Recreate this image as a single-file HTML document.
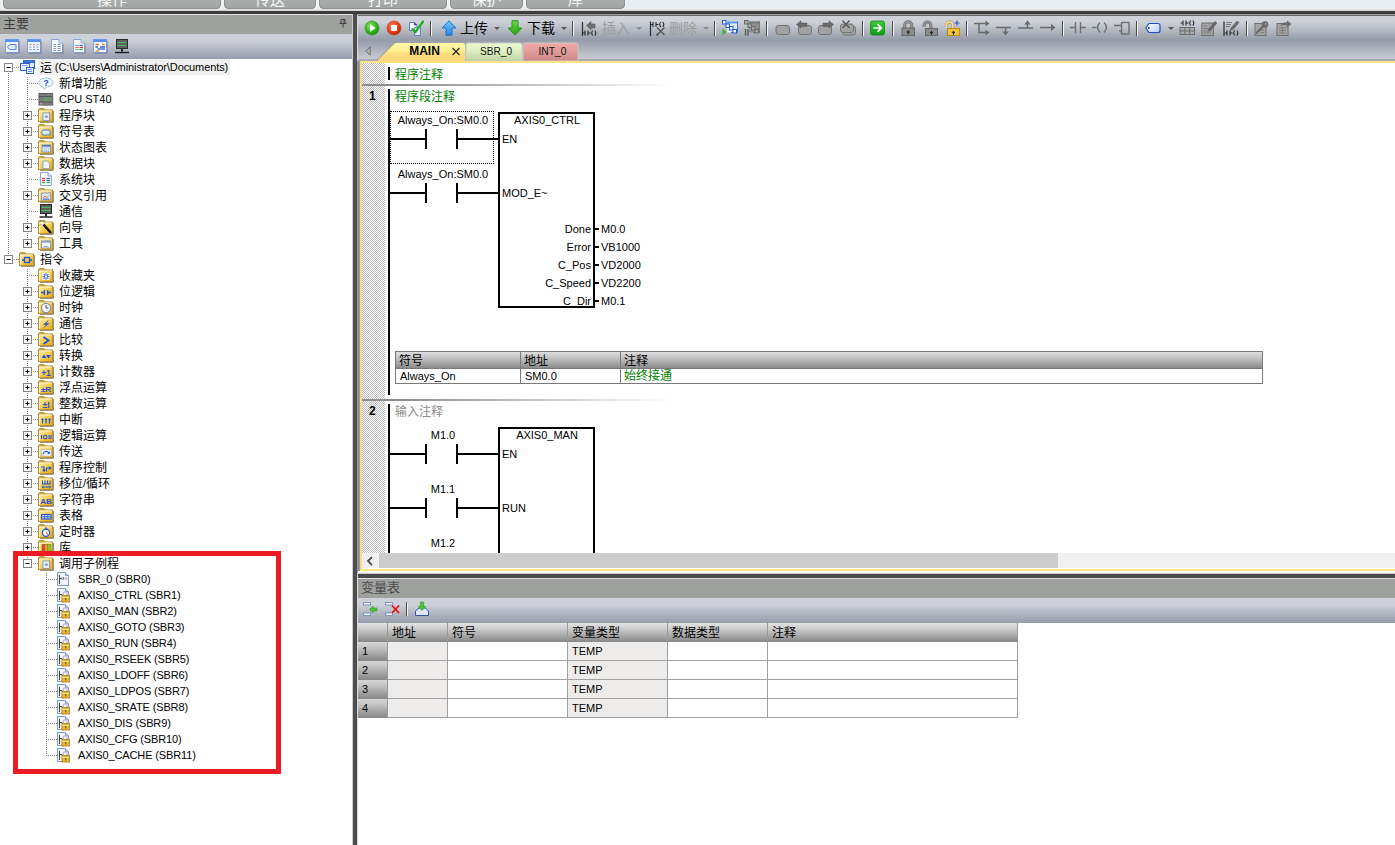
<!DOCTYPE html>
<html><head><meta charset="utf-8"><title>STEP 7-Micro/WIN SMART</title>
<style>
*{box-sizing:border-box;margin:0;padding:0}
html,body{width:1395px;height:845px;overflow:hidden;background:#fff}
body{position:relative;font-family:"Liberation Sans","Noto Sans CJK SC",sans-serif;font-size:11px;color:#000}
.c{font-size:12px}
.abs{position:absolute}
#ribbon{left:0;top:0;width:1395px;height:10px;background:#e7edf0}
.rg{position:absolute;top:-6px;height:15px;border:1px solid #8d9191;border-radius:0 0 4px 4px;background:linear-gradient(#adb1b0,#a1a5a4);box-shadow:0 0 0 1.5px #f2f4f4;color:#f6f8f8;text-align:center;overflow:hidden}
.rg div{position:relative;top:-3px;font-size:15px;line-height:15px}
.rg .c{font-size:15px}
#lhead .c,#vhead .c{font-size:13px}
#darkband{left:0;top:9px;width:1395px;height:5px;background:linear-gradient(#ececec 0,#d4d4d4 1.5px,#404040 2.2px,#3a3a3a 5px)}
#lhead{left:0;top:14px;width:353px;height:20px;background:#9fa19f;border-top:1px solid #e2e2e2;color:#3d3d3d;line-height:17px;padding-left:3px}
#ltool{left:0;top:34px;width:353px;height:25px;background:linear-gradient(#ced1d7 0%,#cdd0d6 28%,#b7bbc5 55%,#959cab 100%)}
#tree{left:0;top:59px;width:352px;height:786px;background:#fff}
#split{left:352px;top:14px;width:6px;height:831px;background:linear-gradient(90deg,#cfcfcf 0,#cfcfcf 1px,#4e4e4e 1px,#4e4e4e 4.6px,#d9d9d9 4.6px,#d9d9d9 5.5px,#8a8a8a 5.5px)}
#rtool{left:358px;top:15px;width:1037px;height:46px;background:linear-gradient(#6c6c6c 0,#6c6c6c 1px,#ced1d7 1px,#cdd0d6 7px,#959ca8 25px,#c9ccd2 44.5px,#a8aab4 44.5px,#a8aab4 46px)}
#sep2{left:358px;top:571px;width:1037px;height:8px;background:linear-gradient(#fff 0,#f4f4f4 1.5px,#c4c4c4 2.6px,#4a4a4a 3px,#4a4a4a 6.6px,#d8d8d8 7px,#e4e4e4 8px)}
#vhead{left:358px;top:579px;width:1037px;height:19px;background:#9fa19f;color:#4a4a4a;line-height:18px;padding-left:3px}
#vtool{left:358px;top:598px;width:1037px;height:25px;background:linear-gradient(#ced1d7 0%,#cdd0d6 28%,#b7bbc5 55%,#959cab 100%)}
#redbox{left:13px;top:551px;width:268px;height:223px;border:5px solid #ed1c24}

.dv{position:absolute;width:1px;background:repeating-linear-gradient(#fff 0,#fff 1px,#808080 1px,#808080 2px)}
.dh{position:absolute;height:1px;background:repeating-linear-gradient(90deg,#fff 0,#fff 1px,#808080 1px,#808080 2px)}
.tl{position:absolute;height:16px;line-height:16px;padding:0 2px;white-space:nowrap;font-size:11px}
.tl.sel{background:#f0f0f0;letter-spacing:-0.1px}
.tl .c{position:relative;top:1px}
.tl.l2{letter-spacing:-0.13px}

.tsep{position:absolute;top:6px;width:2px;height:15px;background:linear-gradient(90deg,#4a4a4a 0,#4a4a4a 1px,#f4f4f4 1px)}
.tlbl{position:absolute;top:3px;height:20px;line-height:20px;font-size:13px;color:#000;white-space:nowrap;letter-spacing:0}
.tlbl .c{font-size:14px}
.tlbl.g{color:#9c9c9c}

.lt{position:absolute;height:14px;line-height:14px;white-space:nowrap;font-size:11px}
.lt.ctr{text-align:center}
.lt.b{font-weight:bold;font-size:12px}
.grn{color:#008000}
.gry{color:#8c8c8c}
.gut{background-color:#fff;background-image:linear-gradient(45deg,#bcbcbc 25%,transparent 25%,transparent 75%,#bcbcbc 75%),linear-gradient(45deg,#bcbcbc 25%,transparent 25%,transparent 75%,#bcbcbc 75%);background-size:2px 2px;background-position:0 0,1px 1px}
</style></head><body>
<div id="ribbon" class="abs">
 <div class="rg" style="left:3px;width:218px"><div><span class="c">操作</span></div></div>
 <div class="rg" style="left:224px;width:92px"><div><span class="c">传送</span></div></div>
 <div class="rg" style="left:319px;width:128px"><div><span class="c">打印</span></div></div>
 <div class="rg" style="left:450px;width:73px"><div><span class="c">保护</span></div></div>
 <div class="rg" style="left:526px;width:99px"><div><span class="c">库</span></div></div>
</div>
<div id="darkband" class="abs"></div>
<div id="lhead" class="abs"><span class="c">主要</span><svg class="abs" style="left:339px;top:4px" width="8" height="9" viewBox="0 0 8 9"><path d="M2 .5 H6 V4.5 H2 Z M.5 4.5 H7.5 M4 4.5 V8.5" fill="none" stroke="#3f3f3f" stroke-width="1"/><path d="M5 .5 V4.5" stroke="#3f3f3f" stroke-width="1"/></svg></div>
<div id="ltool" class="abs"><div class="abs" style="left:4px;top:4px"><svg width="16" height="16" viewBox="0 0 16 16" style="display:block;"><rect x="1.5" y="1.5" width="13" height="13" fill="#eef3fd" stroke="#7f9fe0" stroke-width="1"/><rect x="1.5" y="1.5" width="13" height="2.5" fill="#5b8ff0"/><path d="M15.3 3 V15.3 H3" stroke="#5a6a8a" stroke-width=".8" fill="none" opacity=".7"/><path d="M5.5 6.5 H12 V11.5 H5.5 L3.5 9 Z" fill="#dfe9fb" stroke="#5f86d8" stroke-width="1"/></svg></div>
<div class="abs" style="left:26px;top:4px"><svg width="16" height="16" viewBox="0 0 16 16" style="display:block;"><rect x="1.5" y="1.5" width="13" height="13" fill="#eef3fd" stroke="#7f9fe0" stroke-width="1"/><rect x="1.5" y="1.5" width="13" height="2.5" fill="#5b8ff0"/><path d="M15.3 3 V15.3 H3" stroke="#5a6a8a" stroke-width=".8" fill="none" opacity=".7"/><path d="M3.5 6.5 H5.5 M7 6.5 H9 M10.5 6.5 H12.5 M3.5 9 H5.5 M7 9 H9 M10.5 9 H12.5 M3.5 11.5 H5.5 M7 11.5 H9 M10.5 11.5 H12.5" stroke="#8a9ab8" stroke-width="1.2"/></svg></div>
<div class="abs" style="left:49px;top:4px"><svg width="16" height="16" viewBox="0 0 16 16" style="display:block;"><path d="M2.5 1.5 H10 L13.5 5 V14.5 H2.5 Z" fill="#f3f7ff" stroke="#8aa6d8" stroke-width="1"/><path d="M10 1.5 V5 H13.5" fill="#dbe6fa" stroke="#8aa6d8"/><path d="M14.3 6 V15.3 H4" stroke="#5a6a8a" stroke-width=".8" fill="none" opacity=".6"/><path d="M4.5 6.5 H7 M8.5 6.5 H11.5 M4.5 8.5 H7 M8.5 8.5 H11.5 M4.5 10.5 H7 M8.5 10.5 H11.5 M4.5 12.5 H7 M8.5 12.5 H11.5" stroke="#8a9ab8" stroke-width="1"/></svg></div>
<div class="abs" style="left:71px;top:4px"><svg width="16" height="16" viewBox="0 0 16 16" style="display:block;"><path d="M2.5 1.5 H10 L13.5 5 V14.5 H2.5 Z" fill="#f3f7ff" stroke="#8aa6d8" stroke-width="1"/><path d="M10 1.5 V5 H13.5" fill="#dbe6fa" stroke="#8aa6d8"/><path d="M14.3 6 V15.3 H4" stroke="#5a6a8a" stroke-width=".8" fill="none" opacity=".6"/><path d="M4.5 7.5 H5.7 M6.3 7.5 H7.5" stroke="#36c" stroke-width="1.2"/><path d="M8.5 7.5 H12" stroke="#36c" stroke-width="1.2"/><path d="M4.5 9.5 H5.7 M6.3 9.5 H7.5 M8.5 9.5 H12" stroke="#e22" stroke-width="1.2"/><path d="M4.5 11.5 H5.7 M6.3 11.5 H7.5 M8.5 11.5 H12" stroke="#3a3" stroke-width="1.2"/></svg></div>
<div class="abs" style="left:92px;top:4px"><svg width="16" height="16" viewBox="0 0 16 16" style="display:block;"><rect x="1.5" y="1.5" width="13" height="13" fill="#eef3fd" stroke="#7f9fe0" stroke-width="1"/><rect x="1.5" y="1.5" width="13" height="2.5" fill="#5b8ff0"/><path d="M15.3 3 V15.3 H3" stroke="#5a6a8a" stroke-width=".8" fill="none" opacity=".7"/><path d="M3.5 6.5 H7 M10 6.5 H12.5" stroke="#f08020" stroke-width="1.3"/><path d="M3.5 9 H6 M8 9 H13" stroke="#36c" stroke-width="1.3"/><path d="M5.5 11 H13" stroke="#36c" stroke-width="1.3"/><path d="M3.5 13 H7" stroke="#f08020" stroke-width="1.3"/></svg></div>
<div class="abs" style="left:114px;top:4px"><svg width="16" height="16" viewBox="0 0 16 16" style="display:block;"><rect x="2.5" y="1.5" width="11" height="9" fill="#5f5f5f" stroke="#2a2a2a"/><path d="M3.5 4.5 H12.5 M3.5 7.5 H12.5" stroke="#3fbf55" stroke-width="1.2"/><path d="M8 10.5 V13.5" stroke="#222" stroke-width="2"/><path d="M1 14.5 H15" stroke="#222" stroke-width="1.5"/></svg></div></div>
<div id="tree" class="abs">
<div class="dv" style="left:8px;top:13px;height:183px"></div>
<div class="dv" style="left:27px;top:17px;height:168px"></div>
<div class="dv" style="left:27px;top:209px;height:291px"></div>
<div class="dv" style="left:46px;top:513px;height:184px"></div>
<div class="dh" style="left:13px;top:8px;width:6px"></div>
<div class="abs" style="left:4px;top:4px"><svg width="9" height="9" viewBox="0 0 9 9" style="display:block;"><rect x=".5" y=".5" width="8" height="8" fill="#fff" stroke="#848484" stroke-width="1"/><path d="M2.5 4.5 H6.5" stroke="#000" stroke-width="1"/></svg></div>
<div class="abs" style="left:19px;top:0px"><svg width="16" height="16" viewBox="0 0 16 16" style="display:block;"><rect x="4.5" y="1.5" width="11" height="8" fill="#e6eefc" stroke="#2f62c8"/><rect x="4.5" y="1.5" width="11" height="2" fill="#4a80e6" stroke="#2f62c8"/><rect x="1.5" y="4.5" width="9" height="7" fill="#eef3fd" stroke="#2f62c8"/><path d="M3 6.5 H9" stroke="#7fa0e8" stroke-width="1"/><rect x="7.5" y="8.5" width="7" height="6" fill="#f8faff" stroke="#2f62c8"/><path d="M9 10.5 H13 M9 12.5 H13" stroke="#5f8ae0" stroke-width="1"/></svg></div>
<div class="tl sel" style="left:38px;top:0px"><span class="c">运</span> (C:\Users\Administrator\Documents)</div>
<div class="dh" style="left:28px;top:24px;width:11px"></div>
<div class="abs" style="left:38px;top:16px"><svg width="16" height="16" viewBox="0 0 16 16" style="display:block;"><path d="M8 3 C3.5 3 1 5 1 7.5 C1 9.5 2.6 11 5 11.6 L6.5 14.5 L8.2 12 C12.5 12 15 10 15 7.5 C15 5 12.5 3 8 3 Z" fill="#eef7fd" stroke="#9cc3dc" stroke-width="1"/><text x="8" y="10.5" font-family="Liberation Sans,sans-serif" font-size="8.5" font-weight="bold" fill="#2446c8" text-anchor="middle">?</text></svg></div>
<div class="tl" style="left:57px;top:16px"><span class="c">新增功能</span></div>
<div class="dh" style="left:28px;top:40px;width:10px"></div>
<div class="abs" style="left:38px;top:32px"><svg width="16" height="16" viewBox="0 0 16 16" style="display:block;"><rect x="1" y="2.5" width="13.5" height="11.5" fill="#7e7e7e" stroke="#5a5a5a" stroke-width="1"/><path d="M1 5.5 H14.5 M1 11 H14.5" stroke="#555" stroke-width="1"/><path d="M5.5 7 H13 M5.5 9.5 H13" stroke="#35e04a" stroke-width="1" stroke-dasharray="1 1"/><rect x="2" y="12" width="2" height="1.5" fill="#aaa"/><path d="M15 3.5 V14.2 H2.5" stroke="#999" stroke-width=".8" fill="none"/></svg></div>
<div class="tl" style="left:57px;top:32px">CPU ST40</div>
<div class="dh" style="left:32px;top:56px;width:6px"></div>
<div class="abs" style="left:23px;top:52px"><svg width="9" height="9" viewBox="0 0 9 9" style="display:block;"><rect x=".5" y=".5" width="8" height="8" fill="#fff" stroke="#848484" stroke-width="1"/><path d="M2.5 4.5 H6.5" stroke="#000" stroke-width="1"/><path d="M4.5 2.5 V6.5" stroke="#000" stroke-width="1"/></svg></div>
<div class="abs" style="left:38px;top:48px"><svg width="16" height="16" viewBox="0 0 16 16" style="display:block;"><linearGradient id="g1" x1="0" y1="0" x2="1" y2="1"><stop offset="0" stop-color="#fdf2bc"/><stop offset=".42" stop-color="#f7d45e"/><stop offset="1" stop-color="#e3a614"/></linearGradient><path d="M15.3 4 V15.3 H2" stroke="#6e6248" stroke-width="1" fill="none" opacity=".85"/><path d="M.5 3 L1.5 1.5 H6 L7.2 3 Z" fill="#f6e29a" stroke="#b99a45" stroke-width="1"/><rect x=".5" y="3" width="14" height="11.5" fill="url(#g1)" stroke="#b5922f" stroke-width="1"/><path d="M1.5 4 H13.5 M1.5 4 V13.5" stroke="#fff9dc" stroke-width="1" fill="none" opacity=".9"/><rect x="5" y="6" width="6.5" height="7.5" fill="#e8eefc" stroke="#6f8fd0" stroke-width=".8"/><path d="M6.5 9.8 H8 M8.8 9.8 H10.2 M8 8.5 V11 M8.8 8.5 V11" stroke="#6c86c8" stroke-width=".8"/></svg></div>
<div class="tl" style="left:57px;top:48px"><span class="c">程序块</span></div>
<div class="dh" style="left:32px;top:72px;width:6px"></div>
<div class="abs" style="left:23px;top:68px"><svg width="9" height="9" viewBox="0 0 9 9" style="display:block;"><rect x=".5" y=".5" width="8" height="8" fill="#fff" stroke="#848484" stroke-width="1"/><path d="M2.5 4.5 H6.5" stroke="#000" stroke-width="1"/><path d="M4.5 2.5 V6.5" stroke="#000" stroke-width="1"/></svg></div>
<div class="abs" style="left:38px;top:64px"><svg width="16" height="16" viewBox="0 0 16 16" style="display:block;"><linearGradient id="g2" x1="0" y1="0" x2="1" y2="1"><stop offset="0" stop-color="#fdf2bc"/><stop offset=".42" stop-color="#f7d45e"/><stop offset="1" stop-color="#e3a614"/></linearGradient><path d="M15.3 4 V15.3 H2" stroke="#6e6248" stroke-width="1" fill="none" opacity=".85"/><path d="M.5 3 L1.5 1.5 H6 L7.2 3 Z" fill="#f6e29a" stroke="#b99a45" stroke-width="1"/><rect x=".5" y="3" width="14" height="11.5" fill="url(#g2)" stroke="#b5922f" stroke-width="1"/><path d="M1.5 4 H13.5 M1.5 4 V13.5" stroke="#fff9dc" stroke-width="1" fill="none" opacity=".9"/><path d="M5 7 H12 V12 H5 L3.3 9.5 Z" fill="#dfe9fb" stroke="#4d78d0" stroke-width="1"/></svg></div>
<div class="tl" style="left:57px;top:64px"><span class="c">符号表</span></div>
<div class="dh" style="left:32px;top:88px;width:6px"></div>
<div class="abs" style="left:23px;top:84px"><svg width="9" height="9" viewBox="0 0 9 9" style="display:block;"><rect x=".5" y=".5" width="8" height="8" fill="#fff" stroke="#848484" stroke-width="1"/><path d="M2.5 4.5 H6.5" stroke="#000" stroke-width="1"/><path d="M4.5 2.5 V6.5" stroke="#000" stroke-width="1"/></svg></div>
<div class="abs" style="left:38px;top:80px"><svg width="16" height="16" viewBox="0 0 16 16" style="display:block;"><linearGradient id="g3" x1="0" y1="0" x2="1" y2="1"><stop offset="0" stop-color="#fdf2bc"/><stop offset=".42" stop-color="#f7d45e"/><stop offset="1" stop-color="#e3a614"/></linearGradient><path d="M15.3 4 V15.3 H2" stroke="#6e6248" stroke-width="1" fill="none" opacity=".85"/><path d="M.5 3 L1.5 1.5 H6 L7.2 3 Z" fill="#f6e29a" stroke="#b99a45" stroke-width="1"/><rect x=".5" y="3" width="14" height="11.5" fill="url(#g3)" stroke="#b5922f" stroke-width="1"/><path d="M1.5 4 H13.5 M1.5 4 V13.5" stroke="#fff9dc" stroke-width="1" fill="none" opacity=".9"/><rect x="4" y="6" width="8.5" height="7" fill="#dce6f8" stroke="#6f8fd0" stroke-width=".8"/><rect x="4" y="6" width="8.5" height="1.6" fill="#4d78d0"/><path d="M6.2 8 V13 M8.3 8 V13 M10.4 8 V13" stroke="#9fb3dd" stroke-width=".6"/></svg></div>
<div class="tl" style="left:57px;top:80px"><span class="c">状态图表</span></div>
<div class="dh" style="left:32px;top:104px;width:6px"></div>
<div class="abs" style="left:23px;top:100px"><svg width="9" height="9" viewBox="0 0 9 9" style="display:block;"><rect x=".5" y=".5" width="8" height="8" fill="#fff" stroke="#848484" stroke-width="1"/><path d="M2.5 4.5 H6.5" stroke="#000" stroke-width="1"/><path d="M4.5 2.5 V6.5" stroke="#000" stroke-width="1"/></svg></div>
<div class="abs" style="left:38px;top:96px"><svg width="16" height="16" viewBox="0 0 16 16" style="display:block;"><linearGradient id="g4" x1="0" y1="0" x2="1" y2="1"><stop offset="0" stop-color="#fdf2bc"/><stop offset=".42" stop-color="#f7d45e"/><stop offset="1" stop-color="#e3a614"/></linearGradient><path d="M15.3 4 V15.3 H2" stroke="#6e6248" stroke-width="1" fill="none" opacity=".85"/><path d="M.5 3 L1.5 1.5 H6 L7.2 3 Z" fill="#f6e29a" stroke="#b99a45" stroke-width="1"/><rect x=".5" y="3" width="14" height="11.5" fill="url(#g4)" stroke="#b5922f" stroke-width="1"/><path d="M1.5 4 H13.5 M1.5 4 V13.5" stroke="#fff9dc" stroke-width="1" fill="none" opacity=".9"/><path d="M5 6 H9.5 L11.5 8 V13.5 H5 Z" fill="#eef3fc" stroke="#7f99c8" stroke-width=".8"/></svg></div>
<div class="tl" style="left:57px;top:96px"><span class="c">数据块</span></div>
<div class="dh" style="left:28px;top:120px;width:11px"></div>
<div class="abs" style="left:38px;top:112px"><svg width="16" height="16" viewBox="0 0 16 16" style="display:block;"><path d="M2.5 1.5 H10 L13.5 5 V14.5 H2.5 Z" fill="#f3f7ff" stroke="#8aa6d8"/><path d="M10 1.5 V5 H13.5" fill="#dbe6fa" stroke="#8aa6d8"/><path d="M4 7.5 H7" stroke="#d33" stroke-width="1.2"/><path d="M8.5 7.5 H12" stroke="#36c" stroke-width="1.2"/><path d="M4 9.5 H7" stroke="#d33" stroke-width="1.2"/><path d="M8.5 9.5 H12" stroke="#36c" stroke-width="1.2"/><path d="M4 11.5 H7" stroke="#3a3" stroke-width="1.2"/><path d="M8.5 11.5 H12" stroke="#3a3" stroke-width="1.2"/></svg></div>
<div class="tl" style="left:57px;top:112px"><span class="c">系统块</span></div>
<div class="dh" style="left:32px;top:136px;width:6px"></div>
<div class="abs" style="left:23px;top:132px"><svg width="9" height="9" viewBox="0 0 9 9" style="display:block;"><rect x=".5" y=".5" width="8" height="8" fill="#fff" stroke="#848484" stroke-width="1"/><path d="M2.5 4.5 H6.5" stroke="#000" stroke-width="1"/><path d="M4.5 2.5 V6.5" stroke="#000" stroke-width="1"/></svg></div>
<div class="abs" style="left:38px;top:128px"><svg width="16" height="16" viewBox="0 0 16 16" style="display:block;"><linearGradient id="g5" x1="0" y1="0" x2="1" y2="1"><stop offset="0" stop-color="#fdf2bc"/><stop offset=".42" stop-color="#f7d45e"/><stop offset="1" stop-color="#e3a614"/></linearGradient><path d="M15.3 4 V15.3 H2" stroke="#6e6248" stroke-width="1" fill="none" opacity=".85"/><path d="M.5 3 L1.5 1.5 H6 L7.2 3 Z" fill="#f6e29a" stroke="#b99a45" stroke-width="1"/><rect x=".5" y="3" width="14" height="11.5" fill="url(#g5)" stroke="#b5922f" stroke-width="1"/><path d="M1.5 4 H13.5 M1.5 4 V13.5" stroke="#fff9dc" stroke-width="1" fill="none" opacity=".9"/><rect x="3.5" y="6" width="9" height="7" fill="#dfe9fb" stroke="#6f8fd0" stroke-width=".8"/><path d="M5 11 L7 9 L9 10.5 L11 8.5" stroke="#e07820" stroke-width="1" fill="none"/><path d="M5 12 H11" stroke="#36c" stroke-width="1"/></svg></div>
<div class="tl" style="left:57px;top:128px"><span class="c">交叉引用</span></div>
<div class="dh" style="left:28px;top:152px;width:10px"></div>
<div class="abs" style="left:38px;top:144px"><svg width="16" height="16" viewBox="0 0 16 16" style="display:block;"><rect x="2.5" y="1.5" width="11" height="9" fill="#5f5f5f" stroke="#2a2a2a"/><path d="M3.5 4.5 H12.5 M3.5 7.5 H12.5" stroke="#3fbf55" stroke-width="1.2"/><path d="M8 10.5 V13.5" stroke="#222" stroke-width="2"/><path d="M1.5 14 H14.5" stroke="#222" stroke-width="1.5"/></svg></div>
<div class="tl" style="left:57px;top:144px"><span class="c">通信</span></div>
<div class="dh" style="left:32px;top:168px;width:6px"></div>
<div class="abs" style="left:23px;top:164px"><svg width="9" height="9" viewBox="0 0 9 9" style="display:block;"><rect x=".5" y=".5" width="8" height="8" fill="#fff" stroke="#848484" stroke-width="1"/><path d="M2.5 4.5 H6.5" stroke="#000" stroke-width="1"/><path d="M4.5 2.5 V6.5" stroke="#000" stroke-width="1"/></svg></div>
<div class="abs" style="left:38px;top:160px"><svg width="16" height="16" viewBox="0 0 16 16" style="display:block;"><linearGradient id="g6" x1="0" y1="0" x2="1" y2="1"><stop offset="0" stop-color="#fdf2bc"/><stop offset=".42" stop-color="#f7d45e"/><stop offset="1" stop-color="#e3a614"/></linearGradient><path d="M15.3 4 V15.3 H2" stroke="#6e6248" stroke-width="1" fill="none" opacity=".85"/><path d="M.5 3 L1.5 1.5 H6 L7.2 3 Z" fill="#f6e29a" stroke="#b99a45" stroke-width="1"/><rect x=".5" y="3" width="14" height="11.5" fill="url(#g6)" stroke="#b5922f" stroke-width="1"/><path d="M1.5 4 H13.5 M1.5 4 V13.5" stroke="#fff9dc" stroke-width="1" fill="none" opacity=".9"/><path d="M4.5 4.5 L13 14" stroke="#111" stroke-width="2.6"/><path d="M3 3 L5.5 5.5" stroke="#fff" stroke-width="2"/><path d="M2 1.5 l1 1 M6.5 1.5 l-.8 .8 M1.5 6 l.8 -.5" stroke="#333" stroke-width="1"/></svg></div>
<div class="tl" style="left:57px;top:160px"><span class="c">向导</span></div>
<div class="dh" style="left:32px;top:184px;width:6px"></div>
<div class="abs" style="left:23px;top:180px"><svg width="9" height="9" viewBox="0 0 9 9" style="display:block;"><rect x=".5" y=".5" width="8" height="8" fill="#fff" stroke="#848484" stroke-width="1"/><path d="M2.5 4.5 H6.5" stroke="#000" stroke-width="1"/><path d="M4.5 2.5 V6.5" stroke="#000" stroke-width="1"/></svg></div>
<div class="abs" style="left:38px;top:176px"><svg width="16" height="16" viewBox="0 0 16 16" style="display:block;"><linearGradient id="g7" x1="0" y1="0" x2="1" y2="1"><stop offset="0" stop-color="#fdf2bc"/><stop offset=".42" stop-color="#f7d45e"/><stop offset="1" stop-color="#e3a614"/></linearGradient><path d="M15.3 4 V15.3 H2" stroke="#6e6248" stroke-width="1" fill="none" opacity=".85"/><path d="M.5 3 L1.5 1.5 H6 L7.2 3 Z" fill="#f6e29a" stroke="#b99a45" stroke-width="1"/><rect x=".5" y="3" width="14" height="11.5" fill="url(#g7)" stroke="#b5922f" stroke-width="1"/><path d="M1.5 4 H13.5 M1.5 4 V13.5" stroke="#fff9dc" stroke-width="1" fill="none" opacity=".9"/><rect x="3.5" y="6" width="9" height="7" fill="#f4f7fd" stroke="#6f8fd0" stroke-width=".8"/><rect x="3.5" y="6" width="9" height="1.6" fill="#7fa0e0"/><path d="M5.5 11.5 H10.5" stroke="#9ab" stroke-width="1"/></svg></div>
<div class="tl" style="left:57px;top:176px"><span class="c">工具</span></div>
<div class="dh" style="left:13px;top:200px;width:6px"></div>
<div class="abs" style="left:4px;top:196px"><svg width="9" height="9" viewBox="0 0 9 9" style="display:block;"><rect x=".5" y=".5" width="8" height="8" fill="#fff" stroke="#848484" stroke-width="1"/><path d="M2.5 4.5 H6.5" stroke="#000" stroke-width="1"/></svg></div>
<div class="abs" style="left:19px;top:192px"><svg width="16" height="16" viewBox="0 0 16 16" style="display:block;"><linearGradient id="g8" x1="0" y1="0" x2="1" y2="1"><stop offset="0" stop-color="#fdf2bc"/><stop offset=".42" stop-color="#f7d45e"/><stop offset="1" stop-color="#e3a614"/></linearGradient><path d="M15.3 4 V15.3 H2" stroke="#6e6248" stroke-width="1" fill="none" opacity=".85"/><path d="M.5 3 L1.5 1.5 H6 L7.2 3 Z" fill="#f6e29a" stroke="#b99a45" stroke-width="1"/><rect x=".5" y="3" width="14" height="11.5" fill="url(#g8)" stroke="#b5922f" stroke-width="1"/><path d="M1.5 4 H13.5 M1.5 4 V13.5" stroke="#fff9dc" stroke-width="1" fill="none" opacity=".9"/><rect x="5.5" y="6.5" width="5" height="5" fill="none" stroke="#1f55d8" stroke-width="1.3"/><path d="M3 9 H5.5 M10.5 9 H13" stroke="#1f55d8" stroke-width="1.3"/></svg></div>
<div class="tl" style="left:38px;top:192px"><span class="c">指令</span></div>
<div class="dh" style="left:28px;top:216px;width:10px"></div>
<div class="abs" style="left:38px;top:208px"><svg width="16" height="16" viewBox="0 0 16 16" style="display:block;"><linearGradient id="g9" x1="0" y1="0" x2="1" y2="1"><stop offset="0" stop-color="#fdf2bc"/><stop offset=".42" stop-color="#f7d45e"/><stop offset="1" stop-color="#e3a614"/></linearGradient><path d="M15.3 4 V15.3 H2" stroke="#6e6248" stroke-width="1" fill="none" opacity=".85"/><path d="M.5 3 L1.5 1.5 H6 L7.2 3 Z" fill="#f6e29a" stroke="#b99a45" stroke-width="1"/><rect x=".5" y="3" width="14" height="11.5" fill="url(#g9)" stroke="#b5922f" stroke-width="1"/><path d="M1.5 4 H13.5 M1.5 4 V13.5" stroke="#fff9dc" stroke-width="1" fill="none" opacity=".9"/><rect x="4.5" y="6" width="7" height="7" fill="#f4f7ff"/><path d="M8 6.3 V12.7 M4.8 9.5 H11.2 M5.6 7.1 L10.4 11.9 M10.4 7.1 L5.6 11.9" stroke="#3f6fe8" stroke-width="1.1"/><rect x="7" y="8.5" width="2" height="2" fill="#fff"/></svg></div>
<div class="tl" style="left:57px;top:208px"><span class="c">收藏夹</span></div>
<div class="dh" style="left:32px;top:232px;width:6px"></div>
<div class="abs" style="left:23px;top:228px"><svg width="9" height="9" viewBox="0 0 9 9" style="display:block;"><rect x=".5" y=".5" width="8" height="8" fill="#fff" stroke="#848484" stroke-width="1"/><path d="M2.5 4.5 H6.5" stroke="#000" stroke-width="1"/><path d="M4.5 2.5 V6.5" stroke="#000" stroke-width="1"/></svg></div>
<div class="abs" style="left:38px;top:224px"><svg width="16" height="16" viewBox="0 0 16 16" style="display:block;"><linearGradient id="g10" x1="0" y1="0" x2="1" y2="1"><stop offset="0" stop-color="#fdf2bc"/><stop offset=".42" stop-color="#f7d45e"/><stop offset="1" stop-color="#e3a614"/></linearGradient><path d="M15.3 4 V15.3 H2" stroke="#6e6248" stroke-width="1" fill="none" opacity=".85"/><path d="M.5 3 L1.5 1.5 H6 L7.2 3 Z" fill="#f6e29a" stroke="#b99a45" stroke-width="1"/><rect x=".5" y="3" width="14" height="11.5" fill="url(#g10)" stroke="#b5922f" stroke-width="1"/><path d="M1.5 4 H13.5 M1.5 4 V13.5" stroke="#fff9dc" stroke-width="1" fill="none" opacity=".9"/><path d="M3 9.5 H6.3 M9.7 9.5 H13 M6.3 7 V12 M9.7 7 V12" stroke="#1f55d8" stroke-width="1.3"/></svg></div>
<div class="tl" style="left:57px;top:224px"><span class="c">位逻辑</span></div>
<div class="dh" style="left:32px;top:248px;width:6px"></div>
<div class="abs" style="left:23px;top:244px"><svg width="9" height="9" viewBox="0 0 9 9" style="display:block;"><rect x=".5" y=".5" width="8" height="8" fill="#fff" stroke="#848484" stroke-width="1"/><path d="M2.5 4.5 H6.5" stroke="#000" stroke-width="1"/><path d="M4.5 2.5 V6.5" stroke="#000" stroke-width="1"/></svg></div>
<div class="abs" style="left:38px;top:240px"><svg width="16" height="16" viewBox="0 0 16 16" style="display:block;"><linearGradient id="g11" x1="0" y1="0" x2="1" y2="1"><stop offset="0" stop-color="#fdf2bc"/><stop offset=".42" stop-color="#f7d45e"/><stop offset="1" stop-color="#e3a614"/></linearGradient><path d="M15.3 4 V15.3 H2" stroke="#6e6248" stroke-width="1" fill="none" opacity=".85"/><path d="M.5 3 L1.5 1.5 H6 L7.2 3 Z" fill="#f6e29a" stroke="#b99a45" stroke-width="1"/><rect x=".5" y="3" width="14" height="11.5" fill="url(#g11)" stroke="#b5922f" stroke-width="1"/><path d="M1.5 4 H13.5 M1.5 4 V13.5" stroke="#fff9dc" stroke-width="1" fill="none" opacity=".9"/><circle cx="8" cy="9" r="4.6" fill="#f3f6fc" stroke="#8a8fa8" stroke-width="1.2"/><path d="M8 6 V9 H10.5" stroke="#445" stroke-width=".9" fill="none"/></svg></div>
<div class="tl" style="left:57px;top:240px"><span class="c">时钟</span></div>
<div class="dh" style="left:32px;top:264px;width:6px"></div>
<div class="abs" style="left:23px;top:260px"><svg width="9" height="9" viewBox="0 0 9 9" style="display:block;"><rect x=".5" y=".5" width="8" height="8" fill="#fff" stroke="#848484" stroke-width="1"/><path d="M2.5 4.5 H6.5" stroke="#000" stroke-width="1"/><path d="M4.5 2.5 V6.5" stroke="#000" stroke-width="1"/></svg></div>
<div class="abs" style="left:38px;top:256px"><svg width="16" height="16" viewBox="0 0 16 16" style="display:block;"><linearGradient id="g12" x1="0" y1="0" x2="1" y2="1"><stop offset="0" stop-color="#fdf2bc"/><stop offset=".42" stop-color="#f7d45e"/><stop offset="1" stop-color="#e3a614"/></linearGradient><path d="M15.3 4 V15.3 H2" stroke="#6e6248" stroke-width="1" fill="none" opacity=".85"/><path d="M.5 3 L1.5 1.5 H6 L7.2 3 Z" fill="#f6e29a" stroke="#b99a45" stroke-width="1"/><rect x=".5" y="3" width="14" height="11.5" fill="url(#g12)" stroke="#b5922f" stroke-width="1"/><path d="M1.5 4 H13.5 M1.5 4 V13.5" stroke="#fff9dc" stroke-width="1" fill="none" opacity=".9"/><path d="M11 4.5 L5 9.8 H8 L4.5 14 L11.5 8.3 H8.5 Z" fill="#1f55d8"/></svg></div>
<div class="tl" style="left:57px;top:256px"><span class="c">通信</span></div>
<div class="dh" style="left:32px;top:280px;width:6px"></div>
<div class="abs" style="left:23px;top:276px"><svg width="9" height="9" viewBox="0 0 9 9" style="display:block;"><rect x=".5" y=".5" width="8" height="8" fill="#fff" stroke="#848484" stroke-width="1"/><path d="M2.5 4.5 H6.5" stroke="#000" stroke-width="1"/><path d="M4.5 2.5 V6.5" stroke="#000" stroke-width="1"/></svg></div>
<div class="abs" style="left:38px;top:272px"><svg width="16" height="16" viewBox="0 0 16 16" style="display:block;"><linearGradient id="g13" x1="0" y1="0" x2="1" y2="1"><stop offset="0" stop-color="#fdf2bc"/><stop offset=".42" stop-color="#f7d45e"/><stop offset="1" stop-color="#e3a614"/></linearGradient><path d="M15.3 4 V15.3 H2" stroke="#6e6248" stroke-width="1" fill="none" opacity=".85"/><path d="M.5 3 L1.5 1.5 H6 L7.2 3 Z" fill="#f6e29a" stroke="#b99a45" stroke-width="1"/><rect x=".5" y="3" width="14" height="11.5" fill="url(#g13)" stroke="#b5922f" stroke-width="1"/><path d="M1.5 4 H13.5 M1.5 4 V13.5" stroke="#fff9dc" stroke-width="1" fill="none" opacity=".9"/><path d="M5.5 6 L10.5 9.5 L5.5 13" stroke="#1f55d8" stroke-width="1.8" fill="none"/></svg></div>
<div class="tl" style="left:57px;top:272px"><span class="c">比较</span></div>
<div class="dh" style="left:32px;top:296px;width:6px"></div>
<div class="abs" style="left:23px;top:292px"><svg width="9" height="9" viewBox="0 0 9 9" style="display:block;"><rect x=".5" y=".5" width="8" height="8" fill="#fff" stroke="#848484" stroke-width="1"/><path d="M2.5 4.5 H6.5" stroke="#000" stroke-width="1"/><path d="M4.5 2.5 V6.5" stroke="#000" stroke-width="1"/></svg></div>
<div class="abs" style="left:38px;top:288px"><svg width="16" height="16" viewBox="0 0 16 16" style="display:block;"><linearGradient id="g14" x1="0" y1="0" x2="1" y2="1"><stop offset="0" stop-color="#fdf2bc"/><stop offset=".42" stop-color="#f7d45e"/><stop offset="1" stop-color="#e3a614"/></linearGradient><path d="M15.3 4 V15.3 H2" stroke="#6e6248" stroke-width="1" fill="none" opacity=".85"/><path d="M.5 3 L1.5 1.5 H6 L7.2 3 Z" fill="#f6e29a" stroke="#b99a45" stroke-width="1"/><rect x=".5" y="3" width="14" height="11.5" fill="url(#g14)" stroke="#b5922f" stroke-width="1"/><path d="M1.5 4 H13.5 M1.5 4 V13.5" stroke="#fff9dc" stroke-width="1" fill="none" opacity=".9"/><path d="M3.5 11 L6 7.5 L8.5 11 Z M8 8 L10.5 11.5 L13 8 Z" fill="#1f55d8"/></svg></div>
<div class="tl" style="left:57px;top:288px"><span class="c">转换</span></div>
<div class="dh" style="left:32px;top:312px;width:6px"></div>
<div class="abs" style="left:23px;top:308px"><svg width="9" height="9" viewBox="0 0 9 9" style="display:block;"><rect x=".5" y=".5" width="8" height="8" fill="#fff" stroke="#848484" stroke-width="1"/><path d="M2.5 4.5 H6.5" stroke="#000" stroke-width="1"/><path d="M4.5 2.5 V6.5" stroke="#000" stroke-width="1"/></svg></div>
<div class="abs" style="left:38px;top:304px"><svg width="16" height="16" viewBox="0 0 16 16" style="display:block;"><linearGradient id="g15" x1="0" y1="0" x2="1" y2="1"><stop offset="0" stop-color="#fdf2bc"/><stop offset=".42" stop-color="#f7d45e"/><stop offset="1" stop-color="#e3a614"/></linearGradient><path d="M15.3 4 V15.3 H2" stroke="#6e6248" stroke-width="1" fill="none" opacity=".85"/><path d="M.5 3 L1.5 1.5 H6 L7.2 3 Z" fill="#f6e29a" stroke="#b99a45" stroke-width="1"/><rect x=".5" y="3" width="14" height="11.5" fill="url(#g15)" stroke="#b5922f" stroke-width="1"/><path d="M1.5 4 H13.5 M1.5 4 V13.5" stroke="#fff9dc" stroke-width="1" fill="none" opacity=".9"/><text x="8" y="12.5" font-family="Liberation Sans,sans-serif" font-size="8.5" font-weight="bold" fill="#1f55d8" text-anchor="middle" letter-spacing="0">+1</text></svg></div>
<div class="tl" style="left:57px;top:304px"><span class="c">计数器</span></div>
<div class="dh" style="left:32px;top:328px;width:6px"></div>
<div class="abs" style="left:23px;top:324px"><svg width="9" height="9" viewBox="0 0 9 9" style="display:block;"><rect x=".5" y=".5" width="8" height="8" fill="#fff" stroke="#848484" stroke-width="1"/><path d="M2.5 4.5 H6.5" stroke="#000" stroke-width="1"/><path d="M4.5 2.5 V6.5" stroke="#000" stroke-width="1"/></svg></div>
<div class="abs" style="left:38px;top:320px"><svg width="16" height="16" viewBox="0 0 16 16" style="display:block;"><linearGradient id="g16" x1="0" y1="0" x2="1" y2="1"><stop offset="0" stop-color="#fdf2bc"/><stop offset=".42" stop-color="#f7d45e"/><stop offset="1" stop-color="#e3a614"/></linearGradient><path d="M15.3 4 V15.3 H2" stroke="#6e6248" stroke-width="1" fill="none" opacity=".85"/><path d="M.5 3 L1.5 1.5 H6 L7.2 3 Z" fill="#f6e29a" stroke="#b99a45" stroke-width="1"/><rect x=".5" y="3" width="14" height="11.5" fill="url(#g16)" stroke="#b5922f" stroke-width="1"/><path d="M1.5 4 H13.5 M1.5 4 V13.5" stroke="#fff9dc" stroke-width="1" fill="none" opacity=".9"/><text x="8" y="12.5" font-family="Liberation Sans,sans-serif" font-size="8" font-weight="bold" fill="#1f55d8" text-anchor="middle" letter-spacing="0">±R</text></svg></div>
<div class="tl" style="left:57px;top:320px"><span class="c">浮点运算</span></div>
<div class="dh" style="left:32px;top:344px;width:6px"></div>
<div class="abs" style="left:23px;top:340px"><svg width="9" height="9" viewBox="0 0 9 9" style="display:block;"><rect x=".5" y=".5" width="8" height="8" fill="#fff" stroke="#848484" stroke-width="1"/><path d="M2.5 4.5 H6.5" stroke="#000" stroke-width="1"/><path d="M4.5 2.5 V6.5" stroke="#000" stroke-width="1"/></svg></div>
<div class="abs" style="left:38px;top:336px"><svg width="16" height="16" viewBox="0 0 16 16" style="display:block;"><linearGradient id="g17" x1="0" y1="0" x2="1" y2="1"><stop offset="0" stop-color="#fdf2bc"/><stop offset=".42" stop-color="#f7d45e"/><stop offset="1" stop-color="#e3a614"/></linearGradient><path d="M15.3 4 V15.3 H2" stroke="#6e6248" stroke-width="1" fill="none" opacity=".85"/><path d="M.5 3 L1.5 1.5 H6 L7.2 3 Z" fill="#f6e29a" stroke="#b99a45" stroke-width="1"/><rect x=".5" y="3" width="14" height="11.5" fill="url(#g17)" stroke="#b5922f" stroke-width="1"/><path d="M1.5 4 H13.5 M1.5 4 V13.5" stroke="#fff9dc" stroke-width="1" fill="none" opacity=".9"/><text x="8" y="12.5" font-family="Liberation Sans,sans-serif" font-size="8.5" font-weight="bold" fill="#1f55d8" text-anchor="middle" letter-spacing="0">±I</text></svg></div>
<div class="tl" style="left:57px;top:336px"><span class="c">整数运算</span></div>
<div class="dh" style="left:32px;top:360px;width:6px"></div>
<div class="abs" style="left:23px;top:356px"><svg width="9" height="9" viewBox="0 0 9 9" style="display:block;"><rect x=".5" y=".5" width="8" height="8" fill="#fff" stroke="#848484" stroke-width="1"/><path d="M2.5 4.5 H6.5" stroke="#000" stroke-width="1"/><path d="M4.5 2.5 V6.5" stroke="#000" stroke-width="1"/></svg></div>
<div class="abs" style="left:38px;top:352px"><svg width="16" height="16" viewBox="0 0 16 16" style="display:block;"><linearGradient id="g18" x1="0" y1="0" x2="1" y2="1"><stop offset="0" stop-color="#fdf2bc"/><stop offset=".42" stop-color="#f7d45e"/><stop offset="1" stop-color="#e3a614"/></linearGradient><path d="M15.3 4 V15.3 H2" stroke="#6e6248" stroke-width="1" fill="none" opacity=".85"/><path d="M.5 3 L1.5 1.5 H6 L7.2 3 Z" fill="#f6e29a" stroke="#b99a45" stroke-width="1"/><rect x=".5" y="3" width="14" height="11.5" fill="url(#g18)" stroke="#b5922f" stroke-width="1"/><path d="M1.5 4 H13.5 M1.5 4 V13.5" stroke="#fff9dc" stroke-width="1" fill="none" opacity=".9"/><path d="M4.5 8 V12.5 M8 8 V12.5 M11.5 8 V12.5" stroke="#1f55d8" stroke-width="1.2"/><path d="M3 9 L4.5 7 L6 9 Z M6.5 9 L8 7 L9.5 9 Z M10 9 L11.5 7 L13 9 Z" fill="#1f55d8"/></svg></div>
<div class="tl" style="left:57px;top:352px"><span class="c">中断</span></div>
<div class="dh" style="left:32px;top:376px;width:6px"></div>
<div class="abs" style="left:23px;top:372px"><svg width="9" height="9" viewBox="0 0 9 9" style="display:block;"><rect x=".5" y=".5" width="8" height="8" fill="#fff" stroke="#848484" stroke-width="1"/><path d="M2.5 4.5 H6.5" stroke="#000" stroke-width="1"/><path d="M4.5 2.5 V6.5" stroke="#000" stroke-width="1"/></svg></div>
<div class="abs" style="left:38px;top:368px"><svg width="16" height="16" viewBox="0 0 16 16" style="display:block;"><linearGradient id="g19" x1="0" y1="0" x2="1" y2="1"><stop offset="0" stop-color="#fdf2bc"/><stop offset=".42" stop-color="#f7d45e"/><stop offset="1" stop-color="#e3a614"/></linearGradient><path d="M15.3 4 V15.3 H2" stroke="#6e6248" stroke-width="1" fill="none" opacity=".85"/><path d="M.5 3 L1.5 1.5 H6 L7.2 3 Z" fill="#f6e29a" stroke="#b99a45" stroke-width="1"/><rect x=".5" y="3" width="14" height="11.5" fill="url(#g19)" stroke="#b5922f" stroke-width="1"/><path d="M1.5 4 H13.5 M1.5 4 V13.5" stroke="#fff9dc" stroke-width="1" fill="none" opacity=".9"/><path d="M3.5 8 V12 M11.2 8 V12 M13 8 V12" stroke="#1f55d8" stroke-width="1.1"/><rect x="5.6" y="8.2" width="3.2" height="3.6" rx="1.3" fill="none" stroke="#1f55d8" stroke-width="1.1"/></svg></div>
<div class="tl" style="left:57px;top:368px"><span class="c">逻辑运算</span></div>
<div class="dh" style="left:32px;top:392px;width:6px"></div>
<div class="abs" style="left:23px;top:388px"><svg width="9" height="9" viewBox="0 0 9 9" style="display:block;"><rect x=".5" y=".5" width="8" height="8" fill="#fff" stroke="#848484" stroke-width="1"/><path d="M2.5 4.5 H6.5" stroke="#000" stroke-width="1"/><path d="M4.5 2.5 V6.5" stroke="#000" stroke-width="1"/></svg></div>
<div class="abs" style="left:38px;top:384px"><svg width="16" height="16" viewBox="0 0 16 16" style="display:block;"><linearGradient id="g20" x1="0" y1="0" x2="1" y2="1"><stop offset="0" stop-color="#fdf2bc"/><stop offset=".42" stop-color="#f7d45e"/><stop offset="1" stop-color="#e3a614"/></linearGradient><path d="M15.3 4 V15.3 H2" stroke="#6e6248" stroke-width="1" fill="none" opacity=".85"/><path d="M.5 3 L1.5 1.5 H6 L7.2 3 Z" fill="#f6e29a" stroke="#b99a45" stroke-width="1"/><rect x=".5" y="3" width="14" height="11.5" fill="url(#g20)" stroke="#b5922f" stroke-width="1"/><path d="M1.5 4 H13.5 M1.5 4 V13.5" stroke="#fff9dc" stroke-width="1" fill="none" opacity=".9"/><rect x="3.5" y="6.5" width="9.5" height="6.5" fill="#f2f5fb" stroke="#a9b6d4" stroke-width=".6"/><path d="M5 11.5 C5.5 8 9 7.5 11 10" stroke="#1f55d8" stroke-width="1.2" fill="none"/><path d="M11.8 8.3 V11 H9.2 Z" fill="#1f55d8"/></svg></div>
<div class="tl" style="left:57px;top:384px"><span class="c">传送</span></div>
<div class="dh" style="left:32px;top:408px;width:6px"></div>
<div class="abs" style="left:23px;top:404px"><svg width="9" height="9" viewBox="0 0 9 9" style="display:block;"><rect x=".5" y=".5" width="8" height="8" fill="#fff" stroke="#848484" stroke-width="1"/><path d="M2.5 4.5 H6.5" stroke="#000" stroke-width="1"/><path d="M4.5 2.5 V6.5" stroke="#000" stroke-width="1"/></svg></div>
<div class="abs" style="left:38px;top:400px"><svg width="16" height="16" viewBox="0 0 16 16" style="display:block;"><linearGradient id="g21" x1="0" y1="0" x2="1" y2="1"><stop offset="0" stop-color="#fdf2bc"/><stop offset=".42" stop-color="#f7d45e"/><stop offset="1" stop-color="#e3a614"/></linearGradient><path d="M15.3 4 V15.3 H2" stroke="#6e6248" stroke-width="1" fill="none" opacity=".85"/><path d="M.5 3 L1.5 1.5 H6 L7.2 3 Z" fill="#f6e29a" stroke="#b99a45" stroke-width="1"/><rect x=".5" y="3" width="14" height="11.5" fill="url(#g21)" stroke="#b5922f" stroke-width="1"/><path d="M1.5 4 H13.5 M1.5 4 V13.5" stroke="#fff9dc" stroke-width="1" fill="none" opacity=".9"/><path d="M3 8 H6 V12 M4.7 10.7 L6 12.3 L7.3 10.7" stroke="#1f55d8" stroke-width="1.1" fill="none"/><path d="M8.5 12.5 V9 H12.5 M11 7.6 L12.8 9 L11 10.4" stroke="#1f55d8" stroke-width="1.1" fill="none"/></svg></div>
<div class="tl" style="left:57px;top:400px"><span class="c">程序控制</span></div>
<div class="dh" style="left:32px;top:424px;width:6px"></div>
<div class="abs" style="left:23px;top:420px"><svg width="9" height="9" viewBox="0 0 9 9" style="display:block;"><rect x=".5" y=".5" width="8" height="8" fill="#fff" stroke="#848484" stroke-width="1"/><path d="M2.5 4.5 H6.5" stroke="#000" stroke-width="1"/><path d="M4.5 2.5 V6.5" stroke="#000" stroke-width="1"/></svg></div>
<div class="abs" style="left:38px;top:416px"><svg width="16" height="16" viewBox="0 0 16 16" style="display:block;"><linearGradient id="g22" x1="0" y1="0" x2="1" y2="1"><stop offset="0" stop-color="#fdf2bc"/><stop offset=".42" stop-color="#f7d45e"/><stop offset="1" stop-color="#e3a614"/></linearGradient><path d="M15.3 4 V15.3 H2" stroke="#6e6248" stroke-width="1" fill="none" opacity=".85"/><path d="M.5 3 L1.5 1.5 H6 L7.2 3 Z" fill="#f6e29a" stroke="#b99a45" stroke-width="1"/><rect x=".5" y="3" width="14" height="11.5" fill="url(#g22)" stroke="#b5922f" stroke-width="1"/><path d="M1.5 4 H13.5 M1.5 4 V13.5" stroke="#fff9dc" stroke-width="1" fill="none" opacity=".9"/><path d="M4.5 5.5 V9 M7 5.5 V9 M9.5 5.5 V9 M12 5.5 V9 M4 9 H12.5" stroke="#1f55d8" stroke-width="1"/><path d="M4 12 H12.5 M5.5 10.7 L4 12 L5.5 13.3 M11 10.7 L12.5 12 L11 13.3" stroke="#1f55d8" stroke-width="1" fill="none"/></svg></div>
<div class="tl" style="left:57px;top:416px"><span class="c">移位</span>/<span class="c">循环</span></div>
<div class="dh" style="left:32px;top:440px;width:6px"></div>
<div class="abs" style="left:23px;top:436px"><svg width="9" height="9" viewBox="0 0 9 9" style="display:block;"><rect x=".5" y=".5" width="8" height="8" fill="#fff" stroke="#848484" stroke-width="1"/><path d="M2.5 4.5 H6.5" stroke="#000" stroke-width="1"/><path d="M4.5 2.5 V6.5" stroke="#000" stroke-width="1"/></svg></div>
<div class="abs" style="left:38px;top:432px"><svg width="16" height="16" viewBox="0 0 16 16" style="display:block;"><linearGradient id="g23" x1="0" y1="0" x2="1" y2="1"><stop offset="0" stop-color="#fdf2bc"/><stop offset=".42" stop-color="#f7d45e"/><stop offset="1" stop-color="#e3a614"/></linearGradient><path d="M15.3 4 V15.3 H2" stroke="#6e6248" stroke-width="1" fill="none" opacity=".85"/><path d="M.5 3 L1.5 1.5 H6 L7.2 3 Z" fill="#f6e29a" stroke="#b99a45" stroke-width="1"/><rect x=".5" y="3" width="14" height="11.5" fill="url(#g23)" stroke="#b5922f" stroke-width="1"/><path d="M1.5 4 H13.5 M1.5 4 V13.5" stroke="#fff9dc" stroke-width="1" fill="none" opacity=".9"/><text x="8" y="12.5" font-family="Liberation Sans,sans-serif" font-size="8" font-weight="bold" fill="#1f55d8" text-anchor="middle" letter-spacing="0">AB</text></svg></div>
<div class="tl" style="left:57px;top:432px"><span class="c">字符串</span></div>
<div class="dh" style="left:32px;top:456px;width:6px"></div>
<div class="abs" style="left:23px;top:452px"><svg width="9" height="9" viewBox="0 0 9 9" style="display:block;"><rect x=".5" y=".5" width="8" height="8" fill="#fff" stroke="#848484" stroke-width="1"/><path d="M2.5 4.5 H6.5" stroke="#000" stroke-width="1"/><path d="M4.5 2.5 V6.5" stroke="#000" stroke-width="1"/></svg></div>
<div class="abs" style="left:38px;top:448px"><svg width="16" height="16" viewBox="0 0 16 16" style="display:block;"><linearGradient id="g24" x1="0" y1="0" x2="1" y2="1"><stop offset="0" stop-color="#fdf2bc"/><stop offset=".42" stop-color="#f7d45e"/><stop offset="1" stop-color="#e3a614"/></linearGradient><path d="M15.3 4 V15.3 H2" stroke="#6e6248" stroke-width="1" fill="none" opacity=".85"/><path d="M.5 3 L1.5 1.5 H6 L7.2 3 Z" fill="#f6e29a" stroke="#b99a45" stroke-width="1"/><rect x=".5" y="3" width="14" height="11.5" fill="url(#g24)" stroke="#b5922f" stroke-width="1"/><path d="M1.5 4 H13.5 M1.5 4 V13.5" stroke="#fff9dc" stroke-width="1" fill="none" opacity=".9"/><rect x="3.5" y="7.5" width="9.5" height="4.5" fill="#dfe9fb" stroke="#1f55d8" stroke-width="1.1"/><path d="M6.7 7.5 V12 M9.8 7.5 V12 M3.5 9.8 H13" stroke="#1f55d8" stroke-width=".9"/></svg></div>
<div class="tl" style="left:57px;top:448px"><span class="c">表格</span></div>
<div class="dh" style="left:32px;top:472px;width:6px"></div>
<div class="abs" style="left:23px;top:468px"><svg width="9" height="9" viewBox="0 0 9 9" style="display:block;"><rect x=".5" y=".5" width="8" height="8" fill="#fff" stroke="#848484" stroke-width="1"/><path d="M2.5 4.5 H6.5" stroke="#000" stroke-width="1"/><path d="M4.5 2.5 V6.5" stroke="#000" stroke-width="1"/></svg></div>
<div class="abs" style="left:38px;top:464px"><svg width="16" height="16" viewBox="0 0 16 16" style="display:block;"><linearGradient id="g25" x1="0" y1="0" x2="1" y2="1"><stop offset="0" stop-color="#fdf2bc"/><stop offset=".42" stop-color="#f7d45e"/><stop offset="1" stop-color="#e3a614"/></linearGradient><path d="M15.3 4 V15.3 H2" stroke="#6e6248" stroke-width="1" fill="none" opacity=".85"/><path d="M.5 3 L1.5 1.5 H6 L7.2 3 Z" fill="#f6e29a" stroke="#b99a45" stroke-width="1"/><rect x=".5" y="3" width="14" height="11.5" fill="url(#g25)" stroke="#b5922f" stroke-width="1"/><path d="M1.5 4 H13.5 M1.5 4 V13.5" stroke="#fff9dc" stroke-width="1" fill="none" opacity=".9"/><circle cx="8" cy="9.7" r="3.6" fill="#f6f8fd" stroke="#1f55d8" stroke-width="1.2"/><path d="M8 9.7 L10 11.5" stroke="#d22" stroke-width="1"/><path d="M7 5.2 H9" stroke="#1f55d8" stroke-width="1.3"/></svg></div>
<div class="tl" style="left:57px;top:464px"><span class="c">定时器</span></div>
<div class="dh" style="left:32px;top:488px;width:6px"></div>
<div class="abs" style="left:23px;top:484px"><svg width="9" height="9" viewBox="0 0 9 9" style="display:block;"><rect x=".5" y=".5" width="8" height="8" fill="#fff" stroke="#848484" stroke-width="1"/><path d="M2.5 4.5 H6.5" stroke="#000" stroke-width="1"/><path d="M4.5 2.5 V6.5" stroke="#000" stroke-width="1"/></svg></div>
<div class="abs" style="left:38px;top:480px"><svg width="16" height="16" viewBox="0 0 16 16" style="display:block;"><linearGradient id="g26" x1="0" y1="0" x2="1" y2="1"><stop offset="0" stop-color="#fdf2bc"/><stop offset=".42" stop-color="#f7d45e"/><stop offset="1" stop-color="#e3a614"/></linearGradient><path d="M15.3 4 V15.3 H2" stroke="#6e6248" stroke-width="1" fill="none" opacity=".85"/><path d="M.5 3 L1.5 1.5 H6 L7.2 3 Z" fill="#f6e29a" stroke="#b99a45" stroke-width="1"/><rect x=".5" y="3" width="14" height="11.5" fill="url(#g26)" stroke="#b5922f" stroke-width="1"/><path d="M1.5 4 H13.5 M1.5 4 V13.5" stroke="#fff9dc" stroke-width="1" fill="none" opacity=".9"/><rect x="4" y="5.5" width="3" height="8.5" fill="#d8552a" stroke="#9b3a18" stroke-width=".5"/><rect x="7" y="5.5" width="2.8" height="8.5" fill="#e8a030" stroke="#9b6a18" stroke-width=".5"/><rect x="9.8" y="5.5" width="3" height="8.5" fill="#8cc63f" stroke="#5a8a20" stroke-width=".5"/></svg></div>
<div class="tl" style="left:57px;top:480px"><span class="c">库</span></div>
<div class="dh" style="left:32px;top:504px;width:6px"></div>
<div class="abs" style="left:23px;top:500px"><svg width="9" height="9" viewBox="0 0 9 9" style="display:block;"><rect x=".5" y=".5" width="8" height="8" fill="#fff" stroke="#848484" stroke-width="1"/><path d="M2.5 4.5 H6.5" stroke="#000" stroke-width="1"/></svg></div>
<div class="abs" style="left:38px;top:496px"><svg width="16" height="16" viewBox="0 0 16 16" style="display:block;"><linearGradient id="g27" x1="0" y1="0" x2="1" y2="1"><stop offset="0" stop-color="#fdf2bc"/><stop offset=".42" stop-color="#f7d45e"/><stop offset="1" stop-color="#e3a614"/></linearGradient><path d="M15.3 4 V15.3 H2" stroke="#6e6248" stroke-width="1" fill="none" opacity=".85"/><path d="M.5 3 L1.5 1.5 H6 L7.2 3 Z" fill="#f6e29a" stroke="#b99a45" stroke-width="1"/><rect x=".5" y="3" width="14" height="11.5" fill="url(#g27)" stroke="#b5922f" stroke-width="1"/><path d="M1.5 4 H13.5 M1.5 4 V13.5" stroke="#fff9dc" stroke-width="1" fill="none" opacity=".9"/><rect x="5" y="6" width="6.5" height="7.5" fill="#e8eefc" stroke="#6f8fd0" stroke-width=".8"/><path d="M6.5 9.8 H8 M8.8 9.8 H10.2 M8 8.5 V11 M8.8 8.5 V11" stroke="#6c86c8" stroke-width=".8"/></svg></div>
<div class="tl" style="left:57px;top:496px"><span class="c">调用子例程</span></div>
<div class="dh" style="left:47px;top:520px;width:10px"></div>
<div class="abs" style="left:56px;top:512px"><svg width="16" height="16" viewBox="0 0 16 16" style="display:block;"><path d="M1.5 1.5 H9.5 L12.5 4.5 V14.5 H1.5 Z" fill="#eef3fc" stroke="#7f99c8"/><path d="M9.5 1.5 V4.5 H12.5" fill="#d4e0f5" stroke="#7f99c8"/><path d="M3.5 4 V13" stroke="#444" stroke-width="1"/><path d="M3.5 7.5 H6" stroke="#444" stroke-width="1"/><path d="M6 6 V9 M7.5 6 V9 M6 7.5 H5 M7.5 7.5 H8.5" stroke="#777" stroke-width=".8"/><path d="M9.5 6 L10.5 7.5 L9.5 9" stroke="#777" stroke-width=".8" fill="none"/></svg></div>
<div class="tl l2" style="left:76px;top:512px">SBR_0 (SBR0)</div>
<div class="dh" style="left:47px;top:536px;width:10px"></div>
<div class="abs" style="left:56px;top:528px"><svg width="16" height="16" viewBox="0 0 16 16" style="display:block;"><path d="M1.5 1.5 H9.5 L12.5 4.5 V14.5 H1.5 Z" fill="#eef3fc" stroke="#7f99c8"/><path d="M9.5 1.5 V4.5 H12.5" fill="#d4e0f5" stroke="#7f99c8"/><path d="M3.5 4 V13" stroke="#444" stroke-width="1"/><path d="M3.5 7.5 H6" stroke="#444" stroke-width="1"/><path d="M7.2 9 V6.8 a2 2 0 0 1 4 0 V9" fill="none" stroke="#bbb" stroke-width="1.3"/><rect x="6" y="8.5" width="7.5" height="6.5" fill="#eeb733" stroke="#a97a12" stroke-width=".8"/><path d="M6.5 10.5 H13" stroke="#fbe08a" stroke-width="1"/><rect x="9.2" y="11" width="1.2" height="2.5" fill="#7a5a10"/></svg></div>
<div class="tl l2" style="left:76px;top:528px">AXIS0_CTRL (SBR1)</div>
<div class="dh" style="left:47px;top:552px;width:10px"></div>
<div class="abs" style="left:56px;top:544px"><svg width="16" height="16" viewBox="0 0 16 16" style="display:block;"><path d="M1.5 1.5 H9.5 L12.5 4.5 V14.5 H1.5 Z" fill="#eef3fc" stroke="#7f99c8"/><path d="M9.5 1.5 V4.5 H12.5" fill="#d4e0f5" stroke="#7f99c8"/><path d="M3.5 4 V13" stroke="#444" stroke-width="1"/><path d="M3.5 7.5 H6" stroke="#444" stroke-width="1"/><path d="M7.2 9 V6.8 a2 2 0 0 1 4 0 V9" fill="none" stroke="#bbb" stroke-width="1.3"/><rect x="6" y="8.5" width="7.5" height="6.5" fill="#eeb733" stroke="#a97a12" stroke-width=".8"/><path d="M6.5 10.5 H13" stroke="#fbe08a" stroke-width="1"/><rect x="9.2" y="11" width="1.2" height="2.5" fill="#7a5a10"/></svg></div>
<div class="tl l2" style="left:76px;top:544px">AXIS0_MAN (SBR2)</div>
<div class="dh" style="left:47px;top:568px;width:10px"></div>
<div class="abs" style="left:56px;top:560px"><svg width="16" height="16" viewBox="0 0 16 16" style="display:block;"><path d="M1.5 1.5 H9.5 L12.5 4.5 V14.5 H1.5 Z" fill="#eef3fc" stroke="#7f99c8"/><path d="M9.5 1.5 V4.5 H12.5" fill="#d4e0f5" stroke="#7f99c8"/><path d="M3.5 4 V13" stroke="#444" stroke-width="1"/><path d="M3.5 7.5 H6" stroke="#444" stroke-width="1"/><path d="M7.2 9 V6.8 a2 2 0 0 1 4 0 V9" fill="none" stroke="#bbb" stroke-width="1.3"/><rect x="6" y="8.5" width="7.5" height="6.5" fill="#eeb733" stroke="#a97a12" stroke-width=".8"/><path d="M6.5 10.5 H13" stroke="#fbe08a" stroke-width="1"/><rect x="9.2" y="11" width="1.2" height="2.5" fill="#7a5a10"/></svg></div>
<div class="tl l2" style="left:76px;top:560px">AXIS0_GOTO (SBR3)</div>
<div class="dh" style="left:47px;top:584px;width:10px"></div>
<div class="abs" style="left:56px;top:576px"><svg width="16" height="16" viewBox="0 0 16 16" style="display:block;"><path d="M1.5 1.5 H9.5 L12.5 4.5 V14.5 H1.5 Z" fill="#eef3fc" stroke="#7f99c8"/><path d="M9.5 1.5 V4.5 H12.5" fill="#d4e0f5" stroke="#7f99c8"/><path d="M3.5 4 V13" stroke="#444" stroke-width="1"/><path d="M3.5 7.5 H6" stroke="#444" stroke-width="1"/><path d="M7.2 9 V6.8 a2 2 0 0 1 4 0 V9" fill="none" stroke="#bbb" stroke-width="1.3"/><rect x="6" y="8.5" width="7.5" height="6.5" fill="#eeb733" stroke="#a97a12" stroke-width=".8"/><path d="M6.5 10.5 H13" stroke="#fbe08a" stroke-width="1"/><rect x="9.2" y="11" width="1.2" height="2.5" fill="#7a5a10"/></svg></div>
<div class="tl l2" style="left:76px;top:576px">AXIS0_RUN (SBR4)</div>
<div class="dh" style="left:47px;top:600px;width:10px"></div>
<div class="abs" style="left:56px;top:592px"><svg width="16" height="16" viewBox="0 0 16 16" style="display:block;"><path d="M1.5 1.5 H9.5 L12.5 4.5 V14.5 H1.5 Z" fill="#eef3fc" stroke="#7f99c8"/><path d="M9.5 1.5 V4.5 H12.5" fill="#d4e0f5" stroke="#7f99c8"/><path d="M3.5 4 V13" stroke="#444" stroke-width="1"/><path d="M3.5 7.5 H6" stroke="#444" stroke-width="1"/><path d="M7.2 9 V6.8 a2 2 0 0 1 4 0 V9" fill="none" stroke="#bbb" stroke-width="1.3"/><rect x="6" y="8.5" width="7.5" height="6.5" fill="#eeb733" stroke="#a97a12" stroke-width=".8"/><path d="M6.5 10.5 H13" stroke="#fbe08a" stroke-width="1"/><rect x="9.2" y="11" width="1.2" height="2.5" fill="#7a5a10"/></svg></div>
<div class="tl l2" style="left:76px;top:592px">AXIS0_RSEEK (SBR5)</div>
<div class="dh" style="left:47px;top:616px;width:10px"></div>
<div class="abs" style="left:56px;top:608px"><svg width="16" height="16" viewBox="0 0 16 16" style="display:block;"><path d="M1.5 1.5 H9.5 L12.5 4.5 V14.5 H1.5 Z" fill="#eef3fc" stroke="#7f99c8"/><path d="M9.5 1.5 V4.5 H12.5" fill="#d4e0f5" stroke="#7f99c8"/><path d="M3.5 4 V13" stroke="#444" stroke-width="1"/><path d="M3.5 7.5 H6" stroke="#444" stroke-width="1"/><path d="M7.2 9 V6.8 a2 2 0 0 1 4 0 V9" fill="none" stroke="#bbb" stroke-width="1.3"/><rect x="6" y="8.5" width="7.5" height="6.5" fill="#eeb733" stroke="#a97a12" stroke-width=".8"/><path d="M6.5 10.5 H13" stroke="#fbe08a" stroke-width="1"/><rect x="9.2" y="11" width="1.2" height="2.5" fill="#7a5a10"/></svg></div>
<div class="tl l2" style="left:76px;top:608px">AXIS0_LDOFF (SBR6)</div>
<div class="dh" style="left:47px;top:632px;width:10px"></div>
<div class="abs" style="left:56px;top:624px"><svg width="16" height="16" viewBox="0 0 16 16" style="display:block;"><path d="M1.5 1.5 H9.5 L12.5 4.5 V14.5 H1.5 Z" fill="#eef3fc" stroke="#7f99c8"/><path d="M9.5 1.5 V4.5 H12.5" fill="#d4e0f5" stroke="#7f99c8"/><path d="M3.5 4 V13" stroke="#444" stroke-width="1"/><path d="M3.5 7.5 H6" stroke="#444" stroke-width="1"/><path d="M7.2 9 V6.8 a2 2 0 0 1 4 0 V9" fill="none" stroke="#bbb" stroke-width="1.3"/><rect x="6" y="8.5" width="7.5" height="6.5" fill="#eeb733" stroke="#a97a12" stroke-width=".8"/><path d="M6.5 10.5 H13" stroke="#fbe08a" stroke-width="1"/><rect x="9.2" y="11" width="1.2" height="2.5" fill="#7a5a10"/></svg></div>
<div class="tl l2" style="left:76px;top:624px">AXIS0_LDPOS (SBR7)</div>
<div class="dh" style="left:47px;top:648px;width:10px"></div>
<div class="abs" style="left:56px;top:640px"><svg width="16" height="16" viewBox="0 0 16 16" style="display:block;"><path d="M1.5 1.5 H9.5 L12.5 4.5 V14.5 H1.5 Z" fill="#eef3fc" stroke="#7f99c8"/><path d="M9.5 1.5 V4.5 H12.5" fill="#d4e0f5" stroke="#7f99c8"/><path d="M3.5 4 V13" stroke="#444" stroke-width="1"/><path d="M3.5 7.5 H6" stroke="#444" stroke-width="1"/><path d="M7.2 9 V6.8 a2 2 0 0 1 4 0 V9" fill="none" stroke="#bbb" stroke-width="1.3"/><rect x="6" y="8.5" width="7.5" height="6.5" fill="#eeb733" stroke="#a97a12" stroke-width=".8"/><path d="M6.5 10.5 H13" stroke="#fbe08a" stroke-width="1"/><rect x="9.2" y="11" width="1.2" height="2.5" fill="#7a5a10"/></svg></div>
<div class="tl l2" style="left:76px;top:640px">AXIS0_SRATE (SBR8)</div>
<div class="dh" style="left:47px;top:664px;width:10px"></div>
<div class="abs" style="left:56px;top:656px"><svg width="16" height="16" viewBox="0 0 16 16" style="display:block;"><path d="M1.5 1.5 H9.5 L12.5 4.5 V14.5 H1.5 Z" fill="#eef3fc" stroke="#7f99c8"/><path d="M9.5 1.5 V4.5 H12.5" fill="#d4e0f5" stroke="#7f99c8"/><path d="M3.5 4 V13" stroke="#444" stroke-width="1"/><path d="M3.5 7.5 H6" stroke="#444" stroke-width="1"/><path d="M7.2 9 V6.8 a2 2 0 0 1 4 0 V9" fill="none" stroke="#bbb" stroke-width="1.3"/><rect x="6" y="8.5" width="7.5" height="6.5" fill="#eeb733" stroke="#a97a12" stroke-width=".8"/><path d="M6.5 10.5 H13" stroke="#fbe08a" stroke-width="1"/><rect x="9.2" y="11" width="1.2" height="2.5" fill="#7a5a10"/></svg></div>
<div class="tl l2" style="left:76px;top:656px">AXIS0_DIS (SBR9)</div>
<div class="dh" style="left:47px;top:680px;width:10px"></div>
<div class="abs" style="left:56px;top:672px"><svg width="16" height="16" viewBox="0 0 16 16" style="display:block;"><path d="M1.5 1.5 H9.5 L12.5 4.5 V14.5 H1.5 Z" fill="#eef3fc" stroke="#7f99c8"/><path d="M9.5 1.5 V4.5 H12.5" fill="#d4e0f5" stroke="#7f99c8"/><path d="M3.5 4 V13" stroke="#444" stroke-width="1"/><path d="M3.5 7.5 H6" stroke="#444" stroke-width="1"/><path d="M7.2 9 V6.8 a2 2 0 0 1 4 0 V9" fill="none" stroke="#bbb" stroke-width="1.3"/><rect x="6" y="8.5" width="7.5" height="6.5" fill="#eeb733" stroke="#a97a12" stroke-width=".8"/><path d="M6.5 10.5 H13" stroke="#fbe08a" stroke-width="1"/><rect x="9.2" y="11" width="1.2" height="2.5" fill="#7a5a10"/></svg></div>
<div class="tl l2" style="left:76px;top:672px">AXIS0_CFG (SBR10)</div>
<div class="dh" style="left:47px;top:696px;width:10px"></div>
<div class="abs" style="left:56px;top:688px"><svg width="16" height="16" viewBox="0 0 16 16" style="display:block;"><path d="M1.5 1.5 H9.5 L12.5 4.5 V14.5 H1.5 Z" fill="#eef3fc" stroke="#7f99c8"/><path d="M9.5 1.5 V4.5 H12.5" fill="#d4e0f5" stroke="#7f99c8"/><path d="M3.5 4 V13" stroke="#444" stroke-width="1"/><path d="M3.5 7.5 H6" stroke="#444" stroke-width="1"/><path d="M7.2 9 V6.8 a2 2 0 0 1 4 0 V9" fill="none" stroke="#bbb" stroke-width="1.3"/><rect x="6" y="8.5" width="7.5" height="6.5" fill="#eeb733" stroke="#a97a12" stroke-width=".8"/><path d="M6.5 10.5 H13" stroke="#fbe08a" stroke-width="1"/><rect x="9.2" y="11" width="1.2" height="2.5" fill="#7a5a10"/></svg></div>
<div class="tl l2" style="left:76px;top:688px">AXIS0_CACHE (SBR11)</div>
</div>
<div id="split" class="abs"></div>
<div class="abs" style="left:357px;top:14px;width:1038px;height:1px;background:#9c9c9c"></div>
<div id="rtool" class="abs"><div class="abs" style="left:6px;top:5px"><svg width="16" height="16" viewBox="0 0 16 16" style="display:block;"><radialGradient id="g28" cx=".4" cy=".35" r=".7"><stop offset="0" stop-color="#8ee86a"/><stop offset=".6" stop-color="#35b520"/><stop offset="1" stop-color="#148a0c"/></radialGradient><circle cx="8" cy="8" r="7" fill="url(#g28)" stroke="#2a9a1a" stroke-width=".6"/><path d="M6 4.2 L11.6 8 L6 11.8 Z" fill="#fff"/></svg></div>
<div class="abs" style="left:28px;top:5px"><svg width="16" height="16" viewBox="0 0 16 16" style="display:block;"><radialGradient id="g29" cx=".4" cy=".35" r=".7"><stop offset="0" stop-color="#ff8a5a"/><stop offset=".6" stop-color="#e8400f"/><stop offset="1" stop-color="#b82000"/></radialGradient><circle cx="8" cy="8" r="7" fill="url(#g29)" stroke="#c63a14" stroke-width=".6"/><rect x="5" y="5" width="6" height="6" rx="1" fill="#fff"/></svg></div>
<div class="abs" style="left:50px;top:5px"><svg width="16" height="16" viewBox="0 0 16 16" style="display:block;"><path d="M1.5 2.5 H6.5 L9 5 V10.5 H1.5 Z" fill="#eef3fc" stroke="#5f7fc0" stroke-width="1"/><path d="M6.5 2.5 V5 H9" fill="#27408b" stroke="#27408b" stroke-width=".6"/><path d="M6.5 7.5 H12.5 V15.5 H6.5 Z" fill="#e3ebfa" stroke="#5f7fc0" stroke-width="1"/><path d="M4 8.5 L7.5 12 L15.5 1" stroke="#1fae1a" stroke-width="2.2" fill="none"/></svg></div>
<div class="tsep" style="left:72px"></div>
<div class="abs" style="left:83px;top:5px"><svg width="16" height="16" viewBox="0 0 16 16" style="display:block;"><linearGradient id="g30" x1="0" y1="0" x2="0" y2="1"><stop offset="0" stop-color="#7cc8ff"/><stop offset="1" stop-color="#1f86e8"/></linearGradient><path d="M8 .8 L14.8 8 H11 V15.2 H5 V8 H1.2 Z" fill="url(#g30)" stroke="#1a72cc" stroke-width="1" stroke-linejoin="round"/></svg></div>
<div class="tlbl" style="left:102px"><span class="c">上传</span></div>
<div class="abs" style="left:136px;top:12px;width:0;height:0;border-left:3px solid transparent;border-right:3px solid transparent;border-top:3.5px solid #5a5a5a"></div>
<div class="abs" style="left:149px;top:5px"><svg width="16" height="16" viewBox="0 0 16 16" style="display:block;"><linearGradient id="g31" x1="0" y1="0" x2="0" y2="1"><stop offset="0" stop-color="#6fdc4a"/><stop offset="1" stop-color="#1fa312"/></linearGradient><path d="M8 15.2 L14.8 8 H11 V.8 H5 V8 H1.2 Z" fill="url(#g31)" stroke="#1f9a14" stroke-width="1" stroke-linejoin="round"/></svg></div>
<div class="tlbl" style="left:169px"><span class="c">下载</span></div>
<div class="abs" style="left:203px;top:12px;width:0;height:0;border-left:3px solid transparent;border-right:3px solid transparent;border-top:3.5px solid #5a5a5a"></div>
<div class="tsep" style="left:214px"></div>
<div class="abs" style="left:223px;top:5px"><svg width="16" height="16" viewBox="0 0 16 16" style="display:block;"><path d="M1.5 2 V16" stroke="#2a2a2a" stroke-width="1.2"/><path d="M1.5 13 H4.0 M4.0 10.5 V15.5 M7.0 10.5 V15.5 M7.0 13 H9.5" stroke="#2a2a2a" stroke-width="1.1" fill="none"/><path d="M11.7 10.5 q-2 2.5 0 5 M13.8 10.5 q2 2.5 0 5" stroke="#2a2a2a" stroke-width="1.1" fill="none"/><path d="M5.5 5.5 L10 1.5 V4 H14 V8 H10 V9.8 Z" fill="#6e6e6e" stroke="#5a5a5a" stroke-width=".6"/></svg></div>
<div class="tlbl g" style="left:244px"><span class="c">插入</span></div>
<div class="abs" style="left:278px;top:12px;width:0;height:0;border-left:3px solid transparent;border-right:3px solid transparent;border-top:3.5px solid #8a8a8a"></div>
<div class="abs" style="left:291px;top:5px"><svg width="16" height="16" viewBox="0 0 16 16" style="display:block;"><path d="M1.5 1.5 V16" stroke="#2a2a2a" stroke-width="1.2"/><path d="M1.5 4.5 H4.0 M4.0 2.0 V7.0 M7.0 2.0 V7.0 M7.0 4.5 H9.5" stroke="#2a2a2a" stroke-width="1.1" fill="none"/><path d="M11.7 2.0 q-2 2.5 0 5 M13.8 2.0 q2 2.5 0 5" stroke="#2a2a2a" stroke-width="1.1" fill="none"/><path d="M8 7.5 L15.5 15 M15.5 7.5 L8 15" stroke="#555" stroke-width="1.4"/><circle cx="8.3" cy="14.6" r="1.2" fill="#555"/></svg></div>
<div class="tlbl g" style="left:311px"><span class="c">删除</span></div>
<div class="abs" style="left:345px;top:12px;width:0;height:0;border-left:3px solid transparent;border-right:3px solid transparent;border-top:3.5px solid #8a8a8a"></div>
<div class="tsep" style="left:356px"></div>
<div class="abs" style="left:364px;top:5px"><svg width="16" height="16" viewBox="0 0 16 16" style="display:block;"><rect x="5" y="1.5" width="10.5" height="11" fill="#e6eefc"/><rect x="5" y="1.5" width="10.5" height="2" fill="#5b93f0"/><path d="M15.5 1.5 V12.5 H9" stroke="#1f5ad8" stroke-width="1" fill="none" opacity=".8"/><path d="M2 2 L13 11.5" stroke="#1f5ad8" stroke-width="1" fill="none"/><rect x=".5" y=".5" width="3.5" height="3.5" fill="#fff" stroke="#1f5ad8" stroke-width="1"/><rect x="4" y="4" width="3.5" height="3.5" fill="#fff" stroke="#1f5ad8" stroke-width="1"/><rect x="7.5" y="6.5" width="3.5" height="3.5" fill="#fff" stroke="#1f5ad8" stroke-width="1"/><rect x="11" y="9.5" width="3.5" height="3.5" fill="#fff" stroke="#1f5ad8" stroke-width="1"/><path d="M.5 8.5 L4.5 12 L.5 15.5 Z" fill="#2fb52a"/></svg></div>
<div class="abs" style="left:386px;top:5px"><svg width="16" height="16" viewBox="0 0 16 16" style="display:block;"><rect x="5" y="1.5" width="10.5" height="11" fill="#909090"/><rect x="5" y="1.5" width="10.5" height="2" fill="#7a7a7a"/><path d="M15.5 1.5 V12.5 H9" stroke="#6a6a6a" stroke-width="1" fill="none" opacity=".8"/><path d="M2 2 L13 11.5" stroke="#6a6a6a" stroke-width="1" fill="none"/><rect x=".5" y=".5" width="3.5" height="3.5" fill="#a8a8a8" stroke="#6a6a6a" stroke-width="1"/><rect x="4" y="4" width="3.5" height="3.5" fill="#a8a8a8" stroke="#6a6a6a" stroke-width="1"/><rect x="7.5" y="6.5" width="3.5" height="3.5" fill="#a8a8a8" stroke="#6a6a6a" stroke-width="1"/><rect x="11" y="9.5" width="3.5" height="3.5" fill="#a8a8a8" stroke="#6a6a6a" stroke-width="1"/><path d="M1.5 9 V15.5 M4 9 V15.5" stroke="#5a5a5a" stroke-width="1.4"/></svg></div>
<div class="tsep" style="left:408px"></div>
<div class="abs" style="left:417px;top:5px"><svg width="16" height="16" viewBox="0 0 16 16" style="display:block;"><rect x="1" y="5.5" width="13.5" height="9" rx="2.5" fill="#a2a2a2" stroke="#737373" stroke-width="1"/></svg></div>
<div class="abs" style="left:438px;top:5px"><svg width="16" height="16" viewBox="0 0 16 16" style="display:block;"><rect x="2.5" y="5.5" width="13" height="9" rx="2.5" fill="#a2a2a2" stroke="#737373" stroke-width="1"/><path d="M.5 4.5 L5 .8 V3 H11 V6.5 H5 V8.2 Z" fill="#6a6a6a" stroke="#555" stroke-width=".5"/></svg></div>
<div class="abs" style="left:460px;top:5px"><svg width="16" height="16" viewBox="0 0 16 16" style="display:block;"><rect x="0.5" y="5.5" width="13" height="9" rx="2.5" fill="#a2a2a2" stroke="#737373" stroke-width="1"/><path d="M15.5 4.5 L11 .8 V3 H5 V6.5 H11 V8.2 Z" fill="#6a6a6a" stroke="#555" stroke-width=".5"/></svg></div>
<div class="abs" style="left:482px;top:5px"><svg width="16" height="16" viewBox="0 0 16 16" style="display:block;"><rect x="2.5" y="6" width="13" height="9" rx="2.5" fill="#a2a2a2" stroke="#737373" stroke-width="1"/><rect x="0.5" y="4" width="13" height="8.5" rx="2.5" fill="#a2a2a2" stroke="#737373" stroke-width="1"/><path d="M2.5 .5 L9.5 8 M9.5 .5 L2.5 8" stroke="#555" stroke-width="1.2"/></svg></div>
<div class="tsep" style="left:504px"></div>
<div class="abs" style="left:512px;top:5px"><svg width="16" height="16" viewBox="0 0 16 16" style="display:block;"><linearGradient id="g32" x1="0" y1="0" x2="0" y2="1"><stop offset="0" stop-color="#3fc83a"/><stop offset="1" stop-color="#0f9a14"/></linearGradient><rect x=".5" y="1" width="14" height="14" rx="2" fill="url(#g32)" stroke="#0d8a12" stroke-width=".8"/><path d="M3.5 8 H11 M7.5 4.2 L11.3 8 L7.5 11.8" stroke="#fff" stroke-width="1.7" fill="none"/></svg></div>
<div class="tsep" style="left:534px"></div>
<div class="abs" style="left:543px;top:5px"><svg width="16" height="16" viewBox="0 0 16 16" style="display:block;"><path d="M3.7 8 V5.2 a3.5 3.5 0 0 1 7 0 V8" fill="none" stroke="#6e6e6e" stroke-width="3"/><path d="M3.7 8 V5.2 a3.5 3.5 0 0 1 7 0 V8" fill="none" stroke="#9a9a9a" stroke-width="1.4"/><rect x="1" y="8" width="12.5" height="7.5" fill="#8c8c8c" stroke="#666" stroke-width="1"/><path d="M7.25 10.2 l2 2.3 h-1.4 v1.8 h-1.2 v-1.8 h-1.4 Z" fill="#222"/></svg></div>
<div class="abs" style="left:564px;top:5px"><svg width="16" height="16" viewBox="0 0 16 16" style="display:block;"><path d="M2.2 7 V5.2 a3.3 3.3 0 0 1 6.6 0 V9" fill="none" stroke="#6e6e6e" stroke-width="3"/><path d="M2.2 7 V5.2 a3.3 3.3 0 0 1 6.6 0 V9" fill="none" stroke="#9a9a9a" stroke-width="1.4"/><rect x="3.5" y="8.5" width="12" height="7" fill="#8c8c8c" stroke="#666" stroke-width="1"/><path d="M9.5 10.7 l2 2.3 h-1.4 v1.8 h-1.2 v-1.8 h-1.4 Z" fill="#222"/></svg></div>
<div class="abs" style="left:586px;top:5px"><svg width="16" height="16" viewBox="0 0 16 16" style="display:block;"><path d="M2.2 7 V5.2 a3.3 3.3 0 0 1 6.6 0 V9" fill="none" stroke="#b89a5a" stroke-width="3"/><path d="M2.2 7 V5.2 a3.3 3.3 0 0 1 6.6 0 V9" fill="none" stroke="#f6dfa8" stroke-width="1.5"/><rect x="3.5" y="8.5" width="12" height="7" fill="#f3c23a" stroke="#b98a1a" stroke-width="1"/><path d="M9.5 10.7 l2 2.3 h-1.4 v1.8 h-1.2 v-1.8 h-1.4 Z" fill="#222"/><path d="M13 .5 V5.5 M10.5 3 H15.5" stroke="#2a55c8" stroke-width="1.2"/></svg></div>
<div class="tsep" style="left:608px"></div>
<div class="abs" style="left:616px;top:5px"><svg width="16" height="16" viewBox="0 0 16 16" style="display:block;"><path d="M0 3.5 H13 M5 3.5 V12.5 H13" stroke="#6a6a6a" stroke-width="1.5" fill="none"/><path d="M11.5 .5 L15.5 3.5 L11.5 6.5 Z M11.5 9.5 L15.5 12.5 L11.5 15.5 Z" fill="#6a6a6a"/></svg></div>
<div class="abs" style="left:638px;top:5px"><svg width="16" height="16" viewBox="0 0 16 16" style="display:block;"><path d="M0 7.5 H15 M9.5 7.5 V12" stroke="#6a6a6a" stroke-width="1.5"/><path d="M6.3 11.5 H12.7 L9.5 15.5 Z" fill="#6a6a6a"/></svg></div>
<div class="abs" style="left:660px;top:5px"><svg width="16" height="16" viewBox="0 0 16 16" style="display:block;"><path d="M0 8 H15 M9.5 8 V4" stroke="#6a6a6a" stroke-width="1.5"/><path d="M6.3 4.5 H12.7 L9.5 .5 Z" fill="#6a6a6a"/></svg></div>
<div class="abs" style="left:682px;top:5px"><svg width="16" height="16" viewBox="0 0 16 16" style="display:block;"><path d="M0 7.5 H12" stroke="#6a6a6a" stroke-width="1.5"/><path d="M11 4 L15.5 7.5 L11 11 Z" fill="#6a6a6a"/></svg></div>
<div class="tsep" style="left:704px"></div>
<div class="abs" style="left:712px;top:5px"><svg width="16" height="16" viewBox="0 0 16 16" style="display:block;"><path d="M0 7.5 H5.5 M10.5 7.5 H16 M5.5 2 V13 M10.5 2 V13" stroke="#707070" stroke-width="1.4"/></svg></div>
<div class="abs" style="left:734px;top:5px"><svg width="16" height="16" viewBox="0 0 16 16" style="display:block;"><path d="M0 7.5 H4.5" stroke="#707070" stroke-width="1.4"/><path d="M8 2.5 Q3 7.5 8 12.5 M12 2.5 Q17 7.5 12 12.5" stroke="#707070" stroke-width="1.5" fill="none"/></svg></div>
<div class="abs" style="left:756px;top:5px"><svg width="16" height="16" viewBox="0 0 16 16" style="display:block;"><path d="M0 5.5 H7 M5 11 H7" stroke="#707070" stroke-width="1.4"/><rect x="7.5" y="2.5" width="7.5" height="11.5" fill="none" stroke="#707070" stroke-width="1.4"/></svg></div>
<div class="tsep" style="left:778px"></div>
<div class="abs" style="left:787px;top:5px"><svg width="16" height="16" viewBox="0 0 16 16" style="display:block;"><linearGradient id="g33" x1="0" y1="0" x2="1" y2="1"><stop offset="0" stop-color="#fff"/><stop offset="1" stop-color="#b9ccf5"/></linearGradient><path d="M4 3.5 H13 a2 2 0 0 1 2 2 V10.5 a2 2 0 0 1 -2 2 H4 L.8 8 Z" fill="url(#g33)" stroke="#1f4fc0" stroke-width="1.2" stroke-linejoin="round"/><circle cx="3.8" cy="8" r="1" fill="#1f3f9a"/></svg></div>
<div class="abs" style="left:810px;top:12px;width:0;height:0;border-left:3px solid transparent;border-right:3px solid transparent;border-top:3.5px solid #5a5a5a"></div>
<div class="abs" style="left:821px;top:5px"><svg width="16" height="16" viewBox="0 0 16 16" style="display:block;"><path d="M1.5 3 H4.0 M4.0 0.5 V5.5 M7.0 0.5 V5.5 M7.0 3 H9.5" stroke="#2a2a2a" stroke-width="1.1" fill="none"/><path d="M11.7 0.5 q-2 2.5 0 5 M13.8 0.5 q2 2.5 0 5" stroke="#2a2a2a" stroke-width="1.1" fill="none"/><rect x="1" y="7.5" width="14.5" height="7" fill="#a8a8a8" stroke="#6e6e6e" stroke-width="1"/><path d="M1 11 H15.5 M5.8 7.5 V14.5 M10.6 7.5 V14.5" stroke="#6e6e6e" stroke-width="1"/></svg></div>
<div class="abs" style="left:843px;top:5px"><svg width="16" height="16" viewBox="0 0 16 16" style="display:block;"><rect x=".8" y="3" width="11.5" height="12.5" fill="#a4a4a4" stroke="#6e6e6e" stroke-width="1"/><path d="M2.5 6 H6 M2.5 8.5 H8 M2.5 11 H9.5 M2.5 13 H9.5" stroke="#7a7a7a" stroke-width="1"/><path d="M8 8.5 L14 1.5 L16 3 L10 10 L7.5 11 Z" fill="#6a6a6a" stroke="#555" stroke-width=".5"/></svg></div>
<div class="abs" style="left:865px;top:5px"><svg width="16" height="16" viewBox="0 0 16 16" style="display:block;"><path d="M1 1.5 V16" stroke="#2a2a2a" stroke-width="1.2"/><path d="M3 2.5 H9 M3 4.5 H8 M3 6.5 H7" stroke="#7a7a7a" stroke-width="1"/><path d="M1.5 13 H4.0 M4.0 10.5 V15.5 M7.0 10.5 V15.5 M7.0 13 H9.5" stroke="#2a2a2a" stroke-width="1.1" fill="none"/><path d="M11.7 10.5 q-2 2.5 0 5 M13.8 10.5 q2 2.5 0 5" stroke="#2a2a2a" stroke-width="1.1" fill="none"/><path d="M8 8 L14 1 L16 2.5 L10 9.5 L7.5 10.5 Z" fill="#6a6a6a" stroke="#555" stroke-width=".5"/></svg></div>
<div class="tsep" style="left:888px"></div>
<div class="abs" style="left:896px;top:5px"><svg width="16" height="16" viewBox="0 0 16 16" style="display:block;"><rect x="1" y="3.5" width="11" height="12" fill="#a4a4a4" stroke="#6e6e6e" stroke-width="1"/><path d="M6.5 10 H10 M6.5 12.5 H10" stroke="#7a7a7a" stroke-width="1"/><circle cx="11" cy="4.5" r="3.3" fill="#6a6a6a"/><circle cx="11.8" cy="3.8" r="1" fill="#a4a4a4"/><path d="M9 6.5 L2 13.5" stroke="#6a6a6a" stroke-width="2.2"/></svg></div>
<div class="abs" style="left:918px;top:5px"><svg width="16" height="16" viewBox="0 0 16 16" style="display:block;"><rect x="1" y="3.5" width="11" height="12" fill="#a4a4a4" stroke="#6e6e6e" stroke-width="1"/><path d="M3 8 H10 M3 10.5 H10 M3 13 H10 M6.5 7 V14" stroke="#7a7a7a" stroke-width="1"/><path d="M4 6 Q7 1.5 11 2.5 V.5 L15.5 4 L11 7.5 V5.2 Q7.5 4.5 4 6 Z" fill="#6a6a6a"/></svg></div>
<div class="abs" style="left:7px;top:31px"><svg width="6" height="10" viewBox="0 0 6 10" style="display:block"><path d="M5.2 .8 V9.2 L.8 5 Z" fill="none" stroke="#6e6e6e" stroke-width="1"/></svg></div>
<svg class="abs" style="left:17px;top:27px" width="208" height="19" viewBox="0 0 208 19">
<linearGradient id="tgm" x1="0" y1="0" x2="0" y2="1"><stop offset="0" stop-color="#fff9a8"/><stop offset=".45" stop-color="#ffee92"/><stop offset=".55" stop-color="#ffdf80"/><stop offset="1" stop-color="#ffd778"/></linearGradient>
<linearGradient id="tgs" x1="0" y1="0" x2="0" y2="1"><stop offset="0" stop-color="#eefbd0"/><stop offset=".5" stop-color="#dcecc0"/><stop offset="1" stop-color="#bdd3a2"/></linearGradient>
<linearGradient id="tgi" x1="0" y1="0" x2="0" y2="1"><stop offset="0" stop-color="#f2a8a6"/><stop offset=".5" stop-color="#e09a98"/><stop offset="1" stop-color="#c98886"/></linearGradient>
<path d="M148 19 V3 Q148 1 150 1 H201 Q203 1 203 3 V19 Z" fill="url(#tgi)" stroke="#c9cbd0" stroke-width="1"/>
<path d="M91 19 V3 Q91 1 93 1 H145 Q147 1 147 3 V19 Z" fill="url(#tgs)" stroke="#c9cbd0" stroke-width="1"/>
<path d="M1.5 19 L19 1.5 Q19.5 1 20.5 1 H88 Q90 1 90 3 V19 Z" fill="url(#tgm)"/>
<path d="M1.5 19 L19 1.5 Q19.5 1 20.5 1" fill="none" stroke="#8a8d96" stroke-width="1"/>
<text x="49.5" y="12.8" font-family="Liberation Sans,sans-serif" font-size="12" font-weight="bold" fill="#000" text-anchor="middle">MAIN</text>
<path d="M77.5 6 L84.5 13 M84.5 6 L77.5 13" stroke="#222" stroke-width="1.1"/>
<text x="121" y="12.8" font-family="Liberation Sans,sans-serif" font-size="11" fill="#111" text-anchor="middle" textLength="32" lengthAdjust="spacingAndGlyphs">SBR_0</text>
<text x="177.5" y="12.8" font-family="Liberation Sans,sans-serif" font-size="11" fill="#111" text-anchor="middle" textLength="28" lengthAdjust="spacingAndGlyphs">INT_0</text>
</svg></div>
<div class="abs" style="left:357px;top:61px;width:1px;height:512px;background:#9a9a9a;"></div>
<div class="abs" style="left:358px;top:61px;width:1px;height:512px;background:#858585;"></div>
<div class="abs" style="left:359px;top:61px;width:1px;height:511px;background:#9a9ea8;"></div>
<div class="abs" style="left:360px;top:61px;width:1035px;height:510px;background:#fff;border:2px solid #ffe386;border-left:2px solid #ffdc78;border-right:none"></div>
<div class="abs gut" style="left:362px;top:63px;width:23px;height:490px"></div>
<div class="abs" style="left:388px;top:67px;width:2px;height:13px;background:#000;"></div>
<div class="lt grn" style="left:395px;top:68px;"><span class="c">程序注释</span></div>
<div class="abs" style="left:362px;top:84px;width:1033px;height:2px;background:linear-gradient(90deg,#8c8c8c 0,#8f8f8f 40px,#c8c8c8 180px,#fff 310px);"></div>
<div class="lt b" style="left:369px;top:89px;">1</div>
<div class="abs" style="left:388px;top:89px;width:2px;height:306px;background:#000;"></div>
<div class="lt grn" style="left:395px;top:90px;"><span class="c">程序段注释</span></div>
<div class="abs" style="left:390px;top:111px;width:104px;height:53px;border:1px dotted #000"></div>
<div class="abs" style="left:498px;top:112px;width:97px;height:196px;border:2px solid #000;"></div><div class="lt ctr" style="left:487px;width:120px;top:113px">AXIS0_CTRL</div>
<div class="abs" style="left:390px;top:138px;width:36px;height:2px;background:#000;"></div><div class="abs" style="left:425px;top:129px;width:2px;height:20px;background:#000;"></div><div class="abs" style="left:456px;top:129px;width:2px;height:20px;background:#000;"></div><div class="abs" style="left:458px;top:138px;width:40px;height:2px;background:#000;"></div><div class="lt ctr" style="left:383px;width:120px;top:113px">Always_On:SM0.0</div>
<div class="lt" style="left:502px;top:132px;">EN</div>
<div class="abs" style="left:390px;top:192px;width:36px;height:2px;background:#000;"></div><div class="abs" style="left:425px;top:183px;width:2px;height:20px;background:#000;"></div><div class="abs" style="left:456px;top:183px;width:2px;height:20px;background:#000;"></div><div class="abs" style="left:458px;top:192px;width:40px;height:2px;background:#000;"></div><div class="lt ctr" style="left:383px;width:120px;top:167px">Always_On:SM0.0</div>
<div class="lt" style="left:502px;top:186px;">MOD_E~</div>
<div class="lt" style="right:804px;top:222px">Done</div>
<div class="abs" style="left:595px;top:228px;width:4px;height:2px;background:#000;"></div>
<div class="lt" style="left:601px;top:222px;">M0.0</div>
<div class="lt" style="right:804px;top:240px">Error</div>
<div class="abs" style="left:595px;top:246px;width:4px;height:2px;background:#000;"></div>
<div class="lt" style="left:601px;top:240px;">VB1000</div>
<div class="lt" style="right:804px;top:258px">C_Pos</div>
<div class="abs" style="left:595px;top:264px;width:4px;height:2px;background:#000;"></div>
<div class="lt" style="left:601px;top:258px;">VD2000</div>
<div class="lt" style="right:804px;top:276px">C_Speed</div>
<div class="abs" style="left:595px;top:282px;width:4px;height:2px;background:#000;"></div>
<div class="lt" style="left:601px;top:276px;">VD2200</div>
<div class="lt" style="right:804px;top:294px">C_Dir</div>
<div class="abs" style="left:595px;top:300px;width:4px;height:2px;background:#000;"></div>
<div class="lt" style="left:601px;top:294px;">M0.1</div>
<div class="abs" style="left:395px;top:351px;width:868px;height:33px;border:1px solid #7a7a7a;background:#fff"></div>
<div class="abs" style="left:396px;top:352px;width:866px;height:17px;background:linear-gradient(#dedede 0,#d0d0d0 20%,#a2a2a2 75%,#8a8a8a 100%);border-bottom:1px solid #7a7a7a"></div>
<div class="abs" style="left:520px;top:352px;width:1px;height:31px;background:#7a7a7a;"></div>
<div class="abs" style="left:620px;top:352px;width:1px;height:31px;background:#7a7a7a;"></div>
<div class="lt" style="left:399px;top:354px;"><span class="c">符号</span></div>
<div class="lt" style="left:524px;top:354px;"><span class="c">地址</span></div>
<div class="lt" style="left:624px;top:354px;"><span class="c">注释</span></div>
<div class="lt" style="left:400px;top:369px;">Always_On</div>
<div class="lt" style="left:525px;top:369px;">SM0.0</div>
<div class="lt grn" style="left:624px;top:369px;"><span class="c">始终接通</span></div>
<div class="abs" style="left:362px;top:399px;width:1033px;height:2px;background:linear-gradient(90deg,#8c8c8c 0,#8f8f8f 40px,#c8c8c8 180px,#fff 310px);"></div>
<div class="lt b" style="left:369px;top:404px;">2</div>
<div class="abs" style="left:388px;top:404px;width:2px;height:149px;background:#000;"></div>
<div class="lt gry" style="left:395px;top:405px;"><span class="c">输入注释</span></div>
<div class="abs" style="left:498px;top:427px;width:97px;height:126px;border:2px solid #000;border-bottom:none"></div>
<div class="lt ctr" style="left:487px;width:120px;top:428px">AXIS0_MAN</div>
<div class="abs" style="left:390px;top:453px;width:36px;height:2px;background:#000;"></div><div class="abs" style="left:425px;top:444px;width:2px;height:20px;background:#000;"></div><div class="abs" style="left:456px;top:444px;width:2px;height:20px;background:#000;"></div><div class="abs" style="left:458px;top:453px;width:40px;height:2px;background:#000;"></div><div class="lt ctr" style="left:383px;width:120px;top:428px">M1.0</div>
<div class="lt" style="left:502px;top:447px;">EN</div>
<div class="abs" style="left:390px;top:507px;width:36px;height:2px;background:#000;"></div><div class="abs" style="left:425px;top:498px;width:2px;height:20px;background:#000;"></div><div class="abs" style="left:456px;top:498px;width:2px;height:20px;background:#000;"></div><div class="abs" style="left:458px;top:507px;width:40px;height:2px;background:#000;"></div><div class="lt ctr" style="left:383px;width:120px;top:482px">M1.1</div>
<div class="lt" style="left:502px;top:501px;">RUN</div>
<div class="lt ctr" style="left:383px;width:120px;top:536px">M1.2</div>
<div class="abs" style="left:362px;top:553px;width:1033px;height:15px;background:#f0f0f0;"></div>
<div class="abs" style="left:379px;top:553px;width:679px;height:15px;background:#cdcdcd;"></div>
<svg class="abs" style="left:366px;top:556px" width="8" height="10" viewBox="0 0 8 10"><path d="M6 1 L2 5 L6 9" fill="none" stroke="#505050" stroke-width="1.8"/></svg>
<div id="sep2" class="abs"></div>
<div id="vhead" class="abs"><span class="c">变量表</span></div>
<div id="vtool" class="abs"><div class="abs" style="left:4px;top:3px"><svg width="16" height="16" viewBox="0 0 16 16" style="display:block;"><rect x="1.5" y="1.5" width="7" height="2.5" fill="#f3f6fd" stroke="#7f95c8" stroke-width="1"/><rect x="1.5" y="12" width="7" height="2.5" fill="#f3f6fd" stroke="#7f95c8" stroke-width="1"/><path d="M7.5 8.5 L11 5 V7 H15 V10 H11 V12 Z" fill="#4cc23a" stroke="#2f9a22" stroke-width=".6"/></svg></div><div class="abs" style="left:26px;top:3px"><svg width="16" height="16" viewBox="0 0 16 16" style="display:block;"><rect x="1.5" y="1.5" width="7" height="2.5" fill="#f3f6fd" stroke="#7f95c8" stroke-width="1"/><rect x="1.5" y="12" width="7" height="2.5" fill="#f3f6fd" stroke="#7f95c8" stroke-width="1"/><path d="M8 4.5 L15 12 M15 4.5 L8 12" stroke="#e81010" stroke-width="1.8"/></svg></div><div class="tsep" style="left:48px;top:4px;height:14px"></div><div class="abs" style="left:56px;top:3px"><svg width="16" height="16" viewBox="0 0 16 16" style="display:block;"><path d="M1.5 10 L5 7 H11.5 L14.5 10 V14.5 H1.5 Z" fill="#dfe9fb" stroke="#2f55b8" stroke-width="1" stroke-linejoin="round"/><path d="M8 9.5 L4.2 5.5 H6.3 V1 H9.7 V5.5 H11.8 Z" fill="#4cc23a" stroke="#2f9a22" stroke-width=".6"/></svg></div></div>
<div class="abs" style="left:358px;top:623px;width:30px;height:19px;background:linear-gradient(#e2e2e2 0,#d2d2d2 25%,#a4a4a4 75%,#8c8c8c 100%);border-right:1px solid #9a9a9a;border-bottom:1px solid #8a8a8a"></div>
<div class="abs" style="left:388px;top:623px;width:60px;height:19px;background:linear-gradient(#e2e2e2 0,#d2d2d2 25%,#a4a4a4 75%,#8c8c8c 100%);border-right:1px solid #9a9a9a;border-bottom:1px solid #8a8a8a"></div>
<div class="lt" style="left:392px;top:626px;"><span class="c">地址</span></div>
<div class="abs" style="left:448px;top:623px;width:120px;height:19px;background:linear-gradient(#e2e2e2 0,#d2d2d2 25%,#a4a4a4 75%,#8c8c8c 100%);border-right:1px solid #9a9a9a;border-bottom:1px solid #8a8a8a"></div>
<div class="lt" style="left:452px;top:626px;"><span class="c">符号</span></div>
<div class="abs" style="left:568px;top:623px;width:100px;height:19px;background:linear-gradient(#e2e2e2 0,#d2d2d2 25%,#a4a4a4 75%,#8c8c8c 100%);border-right:1px solid #9a9a9a;border-bottom:1px solid #8a8a8a"></div>
<div class="lt" style="left:572px;top:626px;"><span class="c">变量类型</span></div>
<div class="abs" style="left:668px;top:623px;width:100px;height:19px;background:linear-gradient(#e2e2e2 0,#d2d2d2 25%,#a4a4a4 75%,#8c8c8c 100%);border-right:1px solid #9a9a9a;border-bottom:1px solid #8a8a8a"></div>
<div class="lt" style="left:672px;top:626px;"><span class="c">数据类型</span></div>
<div class="abs" style="left:768px;top:623px;width:250px;height:19px;background:linear-gradient(#e2e2e2 0,#d2d2d2 25%,#a4a4a4 75%,#8c8c8c 100%);border-right:1px solid #9a9a9a;border-bottom:1px solid #8a8a8a"></div>
<div class="lt" style="left:772px;top:626px;"><span class="c">注释</span></div>
<div class="abs" style="left:358px;top:642px;width:30px;height:19px;background:linear-gradient(#d6d6d6 0,#c4c4c4 30%,#9a9a9a 80%,#8a8a8a 100%);border-right:1px solid #9a9a9a;border-bottom:1px solid #8a8a8a"></div>
<div class="lt" style="left:362px;top:644px;">1</div>
<div class="abs" style="left:388px;top:642px;width:60px;height:19px;background:#eeeceb;border-right:1px solid #a0a0a0;border-bottom:1px solid #a0a0a0"></div>
<div class="abs" style="left:448px;top:642px;width:120px;height:19px;background:#fff;border-right:1px solid #a0a0a0;border-bottom:1px solid #a0a0a0"></div>
<div class="abs" style="left:568px;top:642px;width:100px;height:19px;background:#eeeceb;border-right:1px solid #a0a0a0;border-bottom:1px solid #a0a0a0"></div>
<div class="lt" style="left:572px;top:644px;">TEMP</div>
<div class="abs" style="left:668px;top:642px;width:100px;height:19px;background:#fff;border-right:1px solid #a0a0a0;border-bottom:1px solid #a0a0a0"></div>
<div class="abs" style="left:768px;top:642px;width:250px;height:19px;background:#fff;border-right:1px solid #a0a0a0;border-bottom:1px solid #a0a0a0"></div>
<div class="abs" style="left:358px;top:661px;width:30px;height:19px;background:linear-gradient(#d6d6d6 0,#c4c4c4 30%,#9a9a9a 80%,#8a8a8a 100%);border-right:1px solid #9a9a9a;border-bottom:1px solid #8a8a8a"></div>
<div class="lt" style="left:362px;top:663px;">2</div>
<div class="abs" style="left:388px;top:661px;width:60px;height:19px;background:#eeeceb;border-right:1px solid #a0a0a0;border-bottom:1px solid #a0a0a0"></div>
<div class="abs" style="left:448px;top:661px;width:120px;height:19px;background:#fff;border-right:1px solid #a0a0a0;border-bottom:1px solid #a0a0a0"></div>
<div class="abs" style="left:568px;top:661px;width:100px;height:19px;background:#eeeceb;border-right:1px solid #a0a0a0;border-bottom:1px solid #a0a0a0"></div>
<div class="lt" style="left:572px;top:663px;">TEMP</div>
<div class="abs" style="left:668px;top:661px;width:100px;height:19px;background:#fff;border-right:1px solid #a0a0a0;border-bottom:1px solid #a0a0a0"></div>
<div class="abs" style="left:768px;top:661px;width:250px;height:19px;background:#fff;border-right:1px solid #a0a0a0;border-bottom:1px solid #a0a0a0"></div>
<div class="abs" style="left:358px;top:680px;width:30px;height:19px;background:linear-gradient(#d6d6d6 0,#c4c4c4 30%,#9a9a9a 80%,#8a8a8a 100%);border-right:1px solid #9a9a9a;border-bottom:1px solid #8a8a8a"></div>
<div class="lt" style="left:362px;top:682px;">3</div>
<div class="abs" style="left:388px;top:680px;width:60px;height:19px;background:#eeeceb;border-right:1px solid #a0a0a0;border-bottom:1px solid #a0a0a0"></div>
<div class="abs" style="left:448px;top:680px;width:120px;height:19px;background:#fff;border-right:1px solid #a0a0a0;border-bottom:1px solid #a0a0a0"></div>
<div class="abs" style="left:568px;top:680px;width:100px;height:19px;background:#eeeceb;border-right:1px solid #a0a0a0;border-bottom:1px solid #a0a0a0"></div>
<div class="lt" style="left:572px;top:682px;">TEMP</div>
<div class="abs" style="left:668px;top:680px;width:100px;height:19px;background:#fff;border-right:1px solid #a0a0a0;border-bottom:1px solid #a0a0a0"></div>
<div class="abs" style="left:768px;top:680px;width:250px;height:19px;background:#fff;border-right:1px solid #a0a0a0;border-bottom:1px solid #a0a0a0"></div>
<div class="abs" style="left:358px;top:699px;width:30px;height:19px;background:linear-gradient(#d6d6d6 0,#c4c4c4 30%,#9a9a9a 80%,#8a8a8a 100%);border-right:1px solid #9a9a9a;border-bottom:1px solid #8a8a8a"></div>
<div class="lt" style="left:362px;top:701px;">4</div>
<div class="abs" style="left:388px;top:699px;width:60px;height:19px;background:#eeeceb;border-right:1px solid #a0a0a0;border-bottom:1px solid #a0a0a0"></div>
<div class="abs" style="left:448px;top:699px;width:120px;height:19px;background:#fff;border-right:1px solid #a0a0a0;border-bottom:1px solid #a0a0a0"></div>
<div class="abs" style="left:568px;top:699px;width:100px;height:19px;background:#eeeceb;border-right:1px solid #a0a0a0;border-bottom:1px solid #a0a0a0"></div>
<div class="lt" style="left:572px;top:701px;">TEMP</div>
<div class="abs" style="left:668px;top:699px;width:100px;height:19px;background:#fff;border-right:1px solid #a0a0a0;border-bottom:1px solid #a0a0a0"></div>
<div class="abs" style="left:768px;top:699px;width:250px;height:19px;background:#fff;border-right:1px solid #a0a0a0;border-bottom:1px solid #a0a0a0"></div>
<div id="redbox" class="abs"></div>
</body></html>
